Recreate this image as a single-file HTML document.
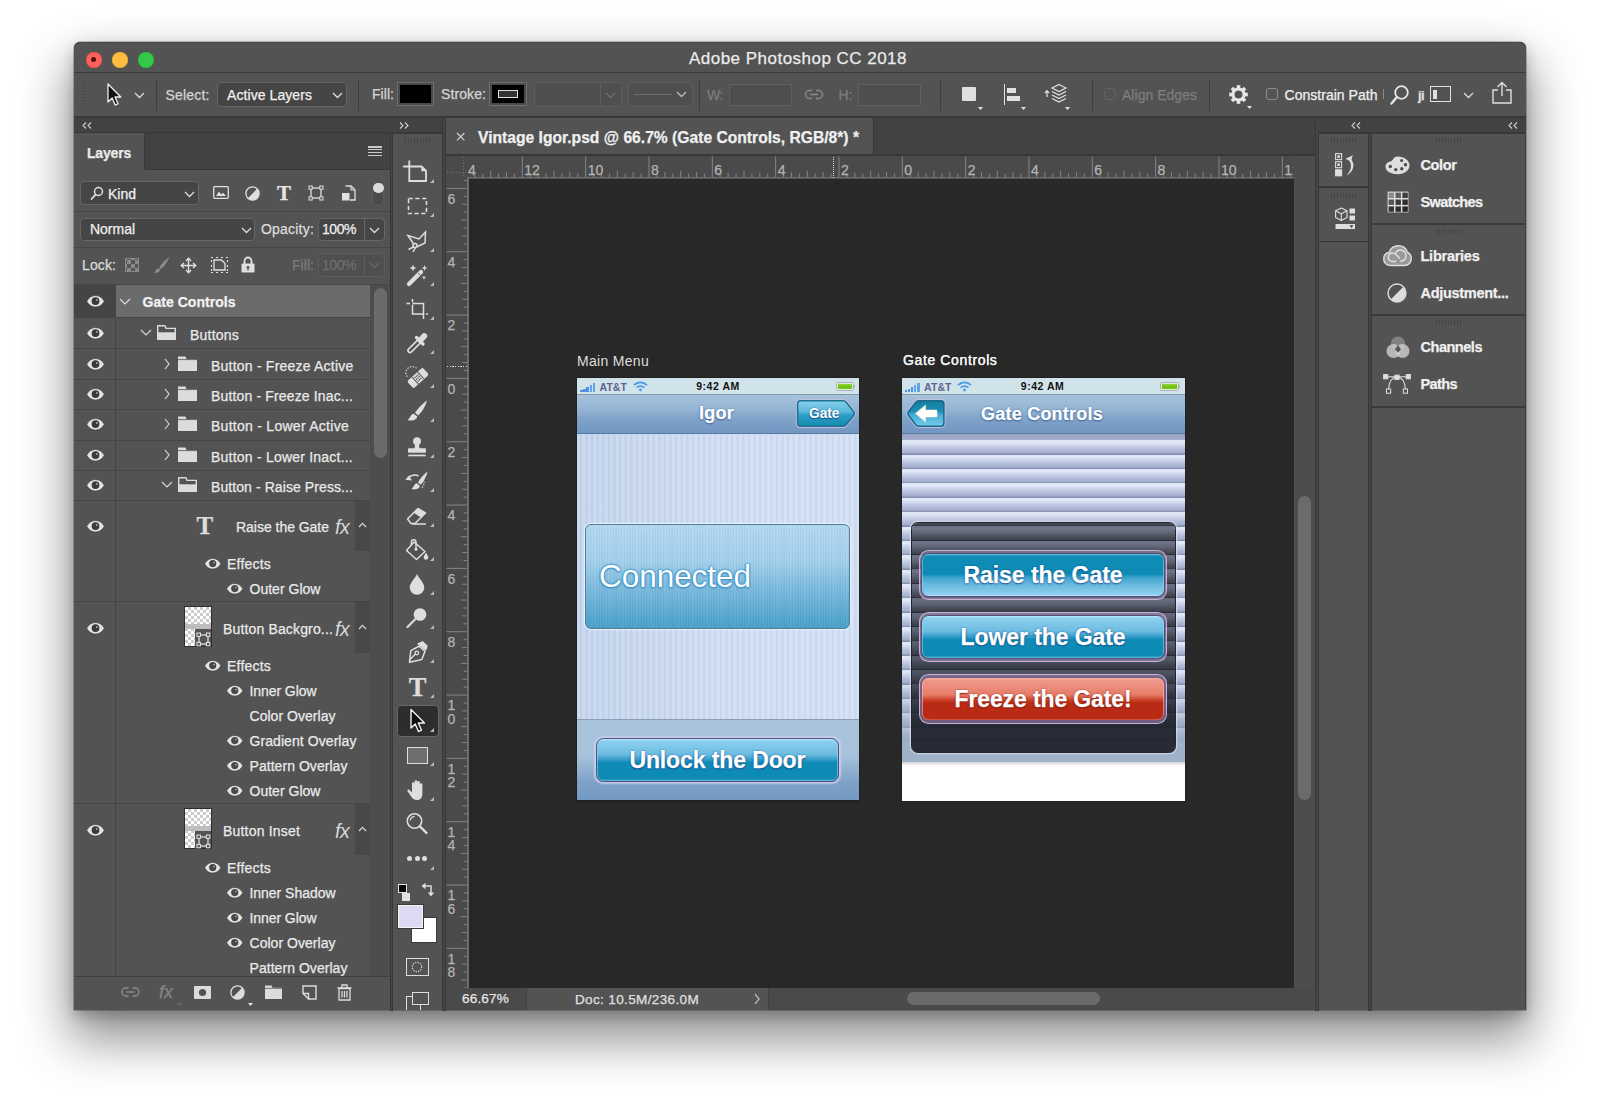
<!DOCTYPE html>
<html><head><meta charset="utf-8"><title>Adobe Photoshop CC 2018</title>
<style>
html,body{margin:0;padding:0;}
body{width:1600px;height:1116px;background:#fff;position:relative;overflow:hidden;font-family:"Liberation Sans",sans-serif;font-size:13px;color:#e8e8e8;}
.a{position:absolute;}
.t{position:absolute;white-space:nowrap;line-height:16px;-webkit-text-stroke:.25px currentColor;}
.b{font-weight:bold;}
#win{position:absolute;left:74px;top:42px;width:1452px;height:968px;background:#535353;border-radius:6px 6px 0 0;box-shadow:inset 0 1px 0 #474747,0 25px 50px 5px rgba(0,0,0,.44),0 6px 14px rgba(0,0,0,.22),0 0 0 .5px rgba(0,0,0,.4);}
.dk{background:#424242;}
.ln{background:#383838;}
.dd{position:absolute;border:1px solid #666;border-radius:4px;background:#454545;box-sizing:border-box;}
svg{position:absolute;overflow:visible;}
</style></head><body>
<div id="win"></div>
<div class="a" style="left:74px;top:71.5px;width:1452px;height:1px;background:#3c3c3c;"></div>
<div class="a" style="left:85.8px;top:51.5px;width:16px;height:16px;border-radius:50%;background:#fc615d;box-shadow:inset 0 0 0 .5px #df4740;"></div>
<div class="a" style="left:112px;top:51.5px;width:16px;height:16px;border-radius:50%;background:#fdbc40;box-shadow:inset 0 0 0 .5px #de9f34;"></div>
<div class="a" style="left:138.4px;top:51.5px;width:16px;height:16px;border-radius:50%;background:#34c84a;box-shadow:inset 0 0 0 .5px #27aa35;"></div>
<div class="a" style="left:91.3px;top:57.0px;width:5px;height:5px;border-radius:50%;background:#5a0e0a;"></div>
<div class="t" style="left:689.00px;top:48.40px;font-size:17px;line-height:22px;letter-spacing:0.478px;color:#ececec;">Adobe Photoshop CC 2018</div>
<div class="a" style="left:74px;top:116px;width:1452px;height:2px;background:#383838;"></div>
<div class="a" style="left:82px;top:82px;width:3px;height:25px;background:repeating-linear-gradient(#484848 0 1px,transparent 1px 3px);"></div>
<svg style="left:104px;top:83px;" width="20" height="24" viewBox="0 0 20 24"><path d="M4 1 L4 19 L8.2 15 L11.2 22 L14 20.8 L11 14 L16.8 14 Z" fill="#111" stroke="#eee" stroke-width="1.3" stroke-linejoin="round"/></svg>
<svg style="left:134px;top:92px;" width="11" height="7" viewBox="0 0 11 7"><path d="M1 1 L5.5 5.5 L10 1" fill="none" stroke="#ddd" stroke-width="1.3"/></svg>
<div class="a" style="left:156px;top:80px;width:1px;height:31px;background:#3e3e3e;"></div>
<div class="t" style="left:165.50px;top:85.50px;font-size:14px;line-height:18px;letter-spacing:0.171px;color:#d6d6d6;">Select:</div>
<div class="dd" style="left:217px;top:82px;width:130px;height:25px;"></div>
<div class="t" style="left:227.00px;top:85.50px;font-size:14px;line-height:18px;letter-spacing:0.074px;color:#f0f0f0;">Active Layers</div>
<svg style="left:332px;top:92px;" width="11" height="7" viewBox="0 0 11 7"><path d="M1 1 L5.5 5.5 L10 1" fill="none" stroke="#ddd" stroke-width="1.3"/></svg>
<div class="a" style="left:358px;top:80px;width:1px;height:31px;background:#3e3e3e;"></div>
<div class="t" style="left:372.00px;top:84.50px;font-size:14px;line-height:18px;letter-spacing:0.045px;color:#d6d6d6;">Fill:</div>
<div class="a" style="left:397px;top:82px;width:37px;height:24px;border:1px solid #6e6e6e;box-sizing:border-box;background:#000;box-shadow:inset 0 0 0 2px #4a4a4a;"></div>
<div class="t" style="left:441.00px;top:84.50px;font-size:14px;line-height:18px;letter-spacing:0.092px;color:#d6d6d6;">Stroke:</div>
<div class="a" style="left:489px;top:82px;width:38px;height:24px;border:1px solid #6e6e6e;box-sizing:border-box;background:#000;box-shadow:inset 0 0 0 2px #4a4a4a;"></div>
<div class="a" style="left:498px;top:90px;width:20px;height:8px;border:1.5px solid #ddd;box-sizing:border-box;background:#333;"></div>
<div class="dd" style="left:534px;top:82px;width:88px;height:25px;border-color:#5e5e5e;background:#4f4f4f;"></div>
<div class="a" style="left:600px;top:83px;width:1px;height:23px;background:#5e5e5e;"></div>
<svg style="left:605px;top:92px;" width="11" height="7" viewBox="0 0 11 7"><path d="M1 1 L5.5 5.5 L10 1" fill="none" stroke="#6e6e6e" stroke-width="1.3"/></svg>
<div class="dd" style="left:628px;top:82px;width:65px;height:25px;border-color:#5e5e5e;background:#4f4f4f;"></div>
<div class="a" style="left:634px;top:93.5px;width:38px;height:1.5px;background:#6a6a6a;"></div>
<svg style="left:676px;top:91px;" width="11" height="7" viewBox="0 0 11 7"><path d="M1 1 L5.5 5.5 L10 1" fill="none" stroke="#bbb" stroke-width="1.3"/></svg>
<div class="a" style="left:699px;top:80px;width:1px;height:31px;background:#3e3e3e;"></div>
<div class="t" style="left:707.00px;top:86.00px;font-size:14px;line-height:18px;letter-spacing:-0.427px;color:#7d7d7d;">W:</div>
<div class="a" style="left:729px;top:84px;width:63px;height:22px;border:1px solid #5f5f5f;box-sizing:border-box;background:#4e4e4e;"></div>
<svg style="left:804px;top:89px;" width="20" height="11" viewBox="0 0 20 11"><g fill="none" stroke="#8a8a8a" stroke-width="1.5"><path d="M8 1.5 H5.5 a4 4 0 0 0 0 8 H8"/><path d="M12 1.5 H14.5 a4 4 0 0 1 0 8 H12"/><path d="M6 5.5 H14"/></g></svg>
<div class="t" style="left:838.50px;top:86.00px;font-size:14px;line-height:18px;letter-spacing:-0.001px;color:#7d7d7d;">H:</div>
<div class="a" style="left:858px;top:84px;width:63px;height:22px;border:1px solid #5f5f5f;box-sizing:border-box;background:#4e4e4e;"></div>
<div class="a" style="left:940px;top:80px;width:1px;height:31px;background:#3e3e3e;"></div>
<div class="a" style="left:962px;top:87px;width:14px;height:14px;background:#e0e0e0;border-radius:1px;"></div>
<svg style="left:977.5px;top:107px;" width="5" height="3" viewBox="0 0 5 3"><path d="M0 0 H5 L2.5 3 Z" fill="#e0e0e0"/></svg>
<div class="a" style="left:1003.5px;top:84px;width:1.5px;height:21px;background:#e0e0e0;"></div>
<div class="a" style="left:1007px;top:88px;width:9px;height:5px;background:#e0e0e0;"></div>
<div class="a" style="left:1007px;top:96px;width:13px;height:5px;background:#e0e0e0;"></div>
<svg style="left:1021px;top:107px;" width="5" height="3" viewBox="0 0 5 3"><path d="M0 0 H5 L2.5 3 Z" fill="#e0e0e0"/></svg>
<svg style="left:1044px;top:83px;" width="26" height="24" viewBox="0 0 26 24"><g fill="none" stroke="#e0e0e0" stroke-width="1.2"><path d="M3 14 V8 M1 10 L3 7.6 L5 10"/><path d="M15 1.5 L22 5 L15 8.5 L8 5 Z" /><path d="M8 8.5 L15 12 L22 8.5"/><path d="M8 12 L15 15.5 L22 12"/><path d="M8 15.5 L15 19 L22 15.5"/></g></svg>
<svg style="left:1065px;top:107px;" width="5" height="3" viewBox="0 0 5 3"><path d="M0 0 H5 L2.5 3 Z" fill="#e0e0e0"/></svg>
<div class="a" style="left:1092px;top:80px;width:1px;height:31px;background:#3e3e3e;"></div>
<div class="a" style="left:1104px;top:88px;width:12px;height:12px;border:1px solid #626262;border-radius:3px;box-sizing:border-box;"></div>
<div class="t" style="left:1122.00px;top:86.00px;font-size:14px;line-height:18px;letter-spacing:0.025px;color:#7d7d7d;">Align Edges</div>
<div class="a" style="left:1209px;top:80px;width:1px;height:31px;background:#3e3e3e;"></div>
<svg style="left:1228.5px;top:84.5px;" width="19" height="19" viewBox="0 0 19 19"><g transform="translate(9.5 9.5)"><g fill="#e6e6e6"><rect x="-1.8" y="-9.3" width="3.6" height="5" transform="rotate(0)"/><rect x="-1.8" y="-9.3" width="3.6" height="5" transform="rotate(45)"/><rect x="-1.8" y="-9.3" width="3.6" height="5" transform="rotate(90)"/><rect x="-1.8" y="-9.3" width="3.6" height="5" transform="rotate(135)"/><rect x="-1.8" y="-9.3" width="3.6" height="5" transform="rotate(180)"/><rect x="-1.8" y="-9.3" width="3.6" height="5" transform="rotate(225)"/><rect x="-1.8" y="-9.3" width="3.6" height="5" transform="rotate(270)"/><rect x="-1.8" y="-9.3" width="3.6" height="5" transform="rotate(315)"/></g><circle r="5.6" fill="none" stroke="#e6e6e6" stroke-width="3"/></g></svg>
<svg style="left:1246.5px;top:106px;" width="5" height="3" viewBox="0 0 5 3"><path d="M0 0 H5 L2.5 3 Z" fill="#e0e0e0"/></svg>
<div class="a" style="left:1266px;top:88px;width:12px;height:12px;border:1px solid #8e8e8e;border-radius:3px;box-sizing:border-box;"></div>
<div class="t" style="left:1284.50px;top:86.00px;font-size:14px;line-height:18px;letter-spacing:0.027px;color:#f0f0f0;">Constrain Path</div>
<div class="a" style="left:1382.5px;top:89px;width:1px;height:10px;background:#8a8a8a;"></div>
<svg style="left:1389px;top:84px;" width="22" height="22" viewBox="0 0 22 22"><circle cx="12.5" cy="8.5" r="6.3" fill="none" stroke="#e6e6e6" stroke-width="1.8"/><path d="M8 13 L2.5 19.5" stroke="#e6e6e6" stroke-width="2.4" stroke-linecap="round"/></svg>
<div class="t" style="left:1418.00px;top:86.50px;font-size:13px;line-height:17px;letter-spacing:-0.611px;font-weight:bold;color:#e0e0e0;">ji</div>
<div class="a" style="left:1430px;top:86px;width:21px;height:16px;border:1.5px solid #e0e0e0;box-sizing:border-box;"></div>
<div class="a" style="left:1433px;top:89.5px;width:3.5px;height:9px;background:#e0e0e0;"></div>
<svg style="left:1463px;top:92px;" width="11" height="7" viewBox="0 0 11 7"><path d="M1 1 L5.5 5.5 L10 1" fill="none" stroke="#ddd" stroke-width="1.3"/></svg>
<svg style="left:1491px;top:81px;" width="22" height="24" viewBox="0 0 22 24"><g fill="none" stroke="#e0e0e0" stroke-width="1.4"><path d="M7 9 H2 V22 H20 V9 H15"/><path d="M11 15 V2 M6.5 6 L11 1.5 L15.5 6"/></g></svg>
<div class="a" style="left:74px;top:118px;width:369px;height:14px;background:#424242;"></div>
<div class="a" style="left:74px;top:132px;width:369px;height:1.9px;background:#383838;"></div>
<svg style="left:82px;top:121.5px;" width="10" height="7" viewBox="0 0 10 7"><path d="M4 0.5 L1 3.5 L4 6.5 M9 0.5 L6 3.5 L9 6.5" fill="none" stroke="#cfcfcf" stroke-width="1.1"/></svg>
<svg style="left:399px;top:121.5px;" width="10" height="7" viewBox="0 0 10 7"><path d="M1 0.5 L4 3.5 L1 6.5 M6 0.5 L9 3.5 L6 6.5" fill="none" stroke="#cfcfcf" stroke-width="1.1"/></svg>
<div class="a" style="left:389.5px;top:133.9px;width:3.6px;height:877px;background:linear-gradient(90deg,#383838 0,#383838 26%,#454545 26%,#454545 74%,#383838 74%);"></div>
<div class="a" style="left:442px;top:117.5px;width:3.8px;height:893px;background:linear-gradient(90deg,#383838 0,#383838 26%,#454545 26%,#454545 74%,#383838 74%);"></div>
<div class="a" style="left:74px;top:133px;width:316px;height:36px;background:#424242;"></div>
<div class="a" style="left:74px;top:133px;width:70px;height:37px;background:#535353;"></div>
<div class="a" style="left:144px;top:133px;width:1px;height:36px;background:#383838;"></div>
<div class="a" style="left:145px;top:169px;width:244.5px;height:1px;background:#383838;"></div>
<div class="t" style="left:87.00px;top:143.50px;font-size:14px;line-height:18px;letter-spacing:-0.192px;font-weight:bold;color:#eaeaea;">Layers</div>
<div class="a" style="left:368px;top:146.3px;width:14px;height:1.3px;background:#c8c8c8;"></div>
<div class="a" style="left:368px;top:149.2px;width:14px;height:1.3px;background:#c8c8c8;"></div>
<div class="a" style="left:368px;top:152px;width:14px;height:1.3px;background:#c8c8c8;"></div>
<div class="a" style="left:368px;top:154.8px;width:14px;height:1.3px;background:#c8c8c8;"></div>
<div class="dd" style="left:80px;top:181.3px;width:119px;height:24.2px;"></div>
<svg style="left:90px;top:186px;" width="14" height="14" viewBox="0 0 14 14"><circle cx="8.5" cy="5.5" r="4" fill="none" stroke="#e0e0e0" stroke-width="1.5"/><path d="M5.6 8.6 L1.5 13" stroke="#e0e0e0" stroke-width="1.8" stroke-linecap="round"/></svg>
<div class="t" style="left:108.00px;top:184.50px;font-size:14px;line-height:18px;letter-spacing:-0.006px;color:#f0f0f0;">Kind</div>
<svg style="left:183.5px;top:191px;" width="11" height="7" viewBox="0 0 11 7"><path d="M1 1 L5.5 5.5 L10 1" fill="none" stroke="#ddd" stroke-width="1.3"/></svg>
<svg style="left:213px;top:186px;" width="16" height="13" viewBox="0 0 16 13"><rect x="0.7" y="0.7" width="14.6" height="11.6" rx="1" fill="none" stroke="#e0e0e0" stroke-width="1.3"/><path d="M3 10 L6 5.5 L8.3 8.5 L10 6.8 L13 10 Z" fill="#e0e0e0"/></svg>
<svg style="left:245px;top:185.5px;" width="15" height="15" viewBox="0 0 15 15"><circle cx="7.5" cy="7.5" r="6.6" fill="none" stroke="#e0e0e0" stroke-width="1.3"/><path d="M2.8 12.2 A6.6 6.6 0 0 0 12.2 2.8 Z" fill="#e0e0e0"/></svg>
<div class="t" style="left:277.00px;top:180.00px;font-size:21px;line-height:27px;font-weight:bold;font-family:'Liberation Serif',serif;color:#e6e6e6;">T</div>
<svg style="left:308px;top:185px;" width="16" height="16" viewBox="0 0 16 16"><rect x="3" y="3" width="10" height="10" fill="none" stroke="#e0e0e0" stroke-width="1.3"/><rect x="1" y="1" width="3.2" height="3.2" fill="#535353" stroke="#e0e0e0" stroke-width="1"/><rect x="11.8" y="1" width="3.2" height="3.2" fill="#535353" stroke="#e0e0e0" stroke-width="1"/><rect x="1" y="11.8" width="3.2" height="3.2" fill="#535353" stroke="#e0e0e0" stroke-width="1"/><rect x="11.8" y="11.8" width="3.2" height="3.2" fill="#535353" stroke="#e0e0e0" stroke-width="1"/></svg>
<svg style="left:341px;top:185px;" width="15" height="16" viewBox="0 0 15 16"><path d="M4.5 1 H10 L14 5 V15 H9" fill="none" stroke="#e0e0e0" stroke-width="1.3"/><path d="M10 1 V5 H14" fill="none" stroke="#e0e0e0" stroke-width="1.1"/><rect x="1" y="8" width="7.5" height="7.5" fill="#e0e0e0"/></svg>
<div class="a" style="left:372px;top:186px;width:12px;height:20px;border-radius:6px;border:1px solid #5f5f5f;box-sizing:border-box;background:#4b4b4b;"></div>
<div class="a" style="left:373px;top:182.5px;width:10.5px;height:10.5px;border-radius:50%;background:#dcdcdc;"></div>
<div class="a" style="left:74px;top:211px;width:316px;height:1px;background:#464646;"></div>
<div class="dd" style="left:80px;top:218px;width:175px;height:23px;"></div>
<div class="t" style="left:90.00px;top:220.00px;font-size:14px;line-height:18px;letter-spacing:-0.020px;color:#f0f0f0;">Normal</div>
<svg style="left:240.5px;top:226.5px;" width="11" height="7" viewBox="0 0 11 7"><path d="M1 1 L5.5 5.5 L10 1" fill="none" stroke="#ddd" stroke-width="1.3"/></svg>
<div class="t" style="left:261.00px;top:220.00px;font-size:14px;line-height:18px;letter-spacing:0.205px;color:#dcdcdc;">Opacity:</div>
<div class="dd" style="left:318px;top:218px;width:67px;height:23px;"></div>
<div class="a" style="left:364px;top:219px;width:1px;height:21px;background:#666;"></div>
<div class="t" style="left:322.00px;top:220.00px;font-size:14px;line-height:18px;letter-spacing:-0.453px;color:#f0f0f0;">100%</div>
<svg style="left:369px;top:226.5px;" width="11" height="7" viewBox="0 0 11 7"><path d="M1 1 L5.5 5.5 L10 1" fill="none" stroke="#ddd" stroke-width="1.3"/></svg>
<div class="a" style="left:74px;top:247px;width:316px;height:1px;background:#464646;"></div>
<div class="t" style="left:82.00px;top:256.00px;font-size:14px;line-height:18px;letter-spacing:0.107px;color:#dcdcdc;">Lock:</div>
<div class="a" style="left:125px;top:258px;width:14px;height:14px;background-color:#8a8a8a;background-image:linear-gradient(45deg,#555 25%,transparent 25%,transparent 75%,#555 75%),linear-gradient(45deg,#555 25%,transparent 25%,transparent 75%,#555 75%);background-size:8px 8px;background-position:1px 1px,5px 5px;border:1px solid #8a8a8a;box-sizing:border-box;"></div>
<svg style="left:153px;top:256px;" width="18" height="18" viewBox="0 0 18 18"><path d="M16.5 1 C12 4 8 8.5 6.2 11.5 L8 13 C11 10.5 14.5 6 16.5 1 Z" fill="#8c8c8c"/><path d="M5.3 12.2 C3 12.6 3 15.5 0.8 16.8 C4 17.2 7 16 7.2 13.8 Z" fill="#8c8c8c"/></svg>
<svg style="left:180px;top:256.5px;" width="17" height="17" viewBox="0 0 17 17"><g fill="none" stroke="#e0e0e0" stroke-width="1.4"><path d="M8.5 1.5 V15.5 M1.5 8.5 H15.5"/><path d="M6 4 L8.5 1.3 L11 4 M6 13 L8.5 15.7 L11 13 M4 6 L1.3 8.5 L4 11 M13 6 L15.7 8.5 L13 11"/></g></svg>
<svg style="left:210px;top:256px;" width="19" height="18" viewBox="0 0 19 18"><g fill="none" stroke="#e0e0e0" stroke-width="1.3"><path d="M4 4 H11.5 L15 7.5 V14 H4 Z"/><path d="M1 1.5 H3 M6 1.5 H8 M11 1.5 H13 M16 1.5 H18 M1 16.5 H3 M6 16.5 H8 M11 16.5 H13 M16 16.5 H18 M1.5 4 V6 M1.5 9 V11 M1.5 13 V15 M17.5 4 V6 M17.5 9 V11 M17.5 13 V15" stroke-width="1.1"/></g></svg>
<svg style="left:241px;top:256px;" width="14" height="17" viewBox="0 0 14 17"><path d="M3.5 8 V5 a3.5 3.5 0 0 1 7 0 V8" fill="none" stroke="#e0e0e0" stroke-width="1.8"/><rect x="0.5" y="7.5" width="13" height="9" rx="1" fill="#e0e0e0"/><circle cx="7" cy="11.3" r="1.4" fill="#535353"/><rect x="6.4" y="11.5" width="1.2" height="3" fill="#535353"/></svg>
<div class="t" style="left:292.00px;top:256.00px;font-size:14px;line-height:18px;letter-spacing:0.045px;color:#7c7c7c;">Fill:</div>
<div class="dd" style="left:318px;top:253px;width:67px;height:24px;border-color:#5c5c5c;background:#4f4f4f;"></div>
<div class="a" style="left:364px;top:254px;width:1px;height:22px;background:#5c5c5c;"></div>
<div class="t" style="left:322.00px;top:256.00px;font-size:14px;line-height:18px;letter-spacing:-0.453px;color:#6e6e6e;">100%</div>
<svg style="left:369px;top:262px;" width="11" height="7" viewBox="0 0 11 7"><path d="M1 1 L5.5 5.5 L10 1" fill="none" stroke="#6a6a6a" stroke-width="1.3"/></svg>
<div class="a" style="left:74px;top:284px;width:316px;height:1px;background:#464646;"></div>
<div class="a" style="left:114.5px;top:285px;width:1px;height:691px;background:#454545;"></div>
<div class="a" style="left:370px;top:285px;width:20px;height:691px;background:#4d4d4d;"></div>
<div class="a" style="left:373.5px;top:288px;width:13.5px;height:170px;border-radius:7px;background:#6b6b6b;"></div>
<div class="a" style="left:74px;top:285px;width:40.5px;height:32.5px;background:#454545;"></div>
<div class="a" style="left:115.5px;top:285px;width:254.5px;height:32.5px;background:#6b6b6b;"></div>
<div class="a" style="left:74px;top:317px;width:296px;height:1px;background:#454545;"></div>
<div class="a" style="left:74px;top:348px;width:296px;height:1px;background:#454545;"></div>
<div class="a" style="left:74px;top:378.5px;width:296px;height:1px;background:#454545;"></div>
<div class="a" style="left:74px;top:409px;width:296px;height:1px;background:#454545;"></div>
<div class="a" style="left:74px;top:439.5px;width:296px;height:1px;background:#454545;"></div>
<div class="a" style="left:74px;top:470px;width:296px;height:1px;background:#454545;"></div>
<div class="a" style="left:74px;top:500px;width:296px;height:1px;background:#454545;"></div>
<svg style="left:85.8px;top:295.0px;" width="19.0" height="12.6" viewBox="0 0 19 12.6"><path d="M0.7 6.3 C4.5 -1.4 14.5 -1.4 18.3 6.3 C14.5 14 4.5 14 0.7 6.3 Z" fill="#e4e4e4" stroke="#3f3f3f" stroke-width=".7"/><circle cx="9.5" cy="6.1" r="3.9" fill="#3a3a3a"/><circle cx="10.8" cy="5" r="0.95" fill="#a8a8a8"/></svg>
<svg style="left:85.8px;top:327.0px;" width="19.0" height="12.6" viewBox="0 0 19 12.6"><path d="M0.7 6.3 C4.5 -1.4 14.5 -1.4 18.3 6.3 C14.5 14 4.5 14 0.7 6.3 Z" fill="#e4e4e4" stroke="#3f3f3f" stroke-width=".7"/><circle cx="9.5" cy="6.1" r="3.9" fill="#3a3a3a"/><circle cx="10.8" cy="5" r="0.95" fill="#a8a8a8"/></svg>
<svg style="left:85.8px;top:357.7px;" width="19.0" height="12.6" viewBox="0 0 19 12.6"><path d="M0.7 6.3 C4.5 -1.4 14.5 -1.4 18.3 6.3 C14.5 14 4.5 14 0.7 6.3 Z" fill="#e4e4e4" stroke="#3f3f3f" stroke-width=".7"/><circle cx="9.5" cy="6.1" r="3.9" fill="#3a3a3a"/><circle cx="10.8" cy="5" r="0.95" fill="#a8a8a8"/></svg>
<svg style="left:85.8px;top:388.0px;" width="19.0" height="12.6" viewBox="0 0 19 12.6"><path d="M0.7 6.3 C4.5 -1.4 14.5 -1.4 18.3 6.3 C14.5 14 4.5 14 0.7 6.3 Z" fill="#e4e4e4" stroke="#3f3f3f" stroke-width=".7"/><circle cx="9.5" cy="6.1" r="3.9" fill="#3a3a3a"/><circle cx="10.8" cy="5" r="0.95" fill="#a8a8a8"/></svg>
<svg style="left:85.8px;top:418.2px;" width="19.0" height="12.6" viewBox="0 0 19 12.6"><path d="M0.7 6.3 C4.5 -1.4 14.5 -1.4 18.3 6.3 C14.5 14 4.5 14 0.7 6.3 Z" fill="#e4e4e4" stroke="#3f3f3f" stroke-width=".7"/><circle cx="9.5" cy="6.1" r="3.9" fill="#3a3a3a"/><circle cx="10.8" cy="5" r="0.95" fill="#a8a8a8"/></svg>
<svg style="left:85.8px;top:448.7px;" width="19.0" height="12.6" viewBox="0 0 19 12.6"><path d="M0.7 6.3 C4.5 -1.4 14.5 -1.4 18.3 6.3 C14.5 14 4.5 14 0.7 6.3 Z" fill="#e4e4e4" stroke="#3f3f3f" stroke-width=".7"/><circle cx="9.5" cy="6.1" r="3.9" fill="#3a3a3a"/><circle cx="10.8" cy="5" r="0.95" fill="#a8a8a8"/></svg>
<svg style="left:85.8px;top:479.0px;" width="19.0" height="12.6" viewBox="0 0 19 12.6"><path d="M0.7 6.3 C4.5 -1.4 14.5 -1.4 18.3 6.3 C14.5 14 4.5 14 0.7 6.3 Z" fill="#e4e4e4" stroke="#3f3f3f" stroke-width=".7"/><circle cx="9.5" cy="6.1" r="3.9" fill="#3a3a3a"/><circle cx="10.8" cy="5" r="0.95" fill="#a8a8a8"/></svg>
<svg style="left:85.8px;top:520.0px;" width="19.0" height="12.6" viewBox="0 0 19 12.6"><path d="M0.7 6.3 C4.5 -1.4 14.5 -1.4 18.3 6.3 C14.5 14 4.5 14 0.7 6.3 Z" fill="#e4e4e4" stroke="#3f3f3f" stroke-width=".7"/><circle cx="9.5" cy="6.1" r="3.9" fill="#3a3a3a"/><circle cx="10.8" cy="5" r="0.95" fill="#a8a8a8"/></svg>
<svg style="left:85.8px;top:622.0px;" width="19.0" height="12.6" viewBox="0 0 19 12.6"><path d="M0.7 6.3 C4.5 -1.4 14.5 -1.4 18.3 6.3 C14.5 14 4.5 14 0.7 6.3 Z" fill="#e4e4e4" stroke="#3f3f3f" stroke-width=".7"/><circle cx="9.5" cy="6.1" r="3.9" fill="#3a3a3a"/><circle cx="10.8" cy="5" r="0.95" fill="#a8a8a8"/></svg>
<svg style="left:85.8px;top:824.0px;" width="19.0" height="12.6" viewBox="0 0 19 12.6"><path d="M0.7 6.3 C4.5 -1.4 14.5 -1.4 18.3 6.3 C14.5 14 4.5 14 0.7 6.3 Z" fill="#e4e4e4" stroke="#3f3f3f" stroke-width=".7"/><circle cx="9.5" cy="6.1" r="3.9" fill="#3a3a3a"/><circle cx="10.8" cy="5" r="0.95" fill="#a8a8a8"/></svg>
<svg style="left:118.7px;top:298px;" width="12" height="7" viewBox="0 0 12 7"><path d="M1 1 L6 6 L11 1" fill="none" stroke="#dedede" stroke-width="1.2"/></svg>
<div class="t" style="left:142.50px;top:292.50px;font-size:14px;line-height:18px;letter-spacing:0.033px;font-weight:bold;color:#f2f2f2;">Gate Controls</div>
<svg style="left:140px;top:328.5px;" width="12" height="7" viewBox="0 0 12 7"><path d="M1 1 L6 6 L11 1" fill="none" stroke="#d8d8d8" stroke-width="1.2"/></svg>
<svg style="left:157px;top:325px;" width="19" height="15" viewBox="0 0 19 15"><path d="M0.7 14.3 V0.8 H8 L9 3.4 H18.3 V14.3 Z" fill="none" stroke="#dcdcdc" stroke-width="1.4" stroke-linejoin="round"/><rect x="0.7" y="7.3" width="17.6" height="7" fill="#dcdcdc"/></svg>
<div class="t" style="left:190.00px;top:326.00px;font-size:14px;line-height:18px;letter-spacing:0.217px;color:#eaeaea;">Buttons</div>
<svg style="left:163.5px;top:357.5px;" width="6" height="12" viewBox="0 0 6 12"><path d="M1 1 L5 6 L1 11" fill="none" stroke="#d8d8d8" stroke-width="1.2"/></svg>
<svg style="left:178px;top:355.5px;" width="19" height="15" viewBox="0 0 19 15"><path d="M0 15 V0.5 H7.5 L8.6 3.2 H19 V15 Z" fill="#dcdcdc"/><path d="M0 3.6 H19" stroke="#535353" stroke-width="0.8"/></svg>
<div class="t" style="left:211.00px;top:356.50px;font-size:14px;line-height:18px;letter-spacing:0.216px;color:#eaeaea;">Button - Freeze Active</div>
<svg style="left:163.5px;top:387.5px;" width="6" height="12" viewBox="0 0 6 12"><path d="M1 1 L5 6 L1 11" fill="none" stroke="#d8d8d8" stroke-width="1.2"/></svg>
<svg style="left:178px;top:385.5px;" width="19" height="15" viewBox="0 0 19 15"><path d="M0 15 V0.5 H7.5 L8.6 3.2 H19 V15 Z" fill="#dcdcdc"/><path d="M0 3.6 H19" stroke="#535353" stroke-width="0.8"/></svg>
<div class="t" style="left:211.00px;top:386.50px;font-size:14px;line-height:18px;letter-spacing:0.151px;color:#eaeaea;">Button - Freeze Inac...</div>
<svg style="left:163.5px;top:418px;" width="6" height="12" viewBox="0 0 6 12"><path d="M1 1 L5 6 L1 11" fill="none" stroke="#d8d8d8" stroke-width="1.2"/></svg>
<svg style="left:178px;top:416px;" width="19" height="15" viewBox="0 0 19 15"><path d="M0 15 V0.5 H7.5 L8.6 3.2 H19 V15 Z" fill="#dcdcdc"/><path d="M0 3.6 H19" stroke="#535353" stroke-width="0.8"/></svg>
<div class="t" style="left:211.00px;top:417.00px;font-size:14px;line-height:18px;letter-spacing:0.271px;color:#eaeaea;">Button - Lower Active</div>
<svg style="left:163.5px;top:448.5px;" width="6" height="12" viewBox="0 0 6 12"><path d="M1 1 L5 6 L1 11" fill="none" stroke="#d8d8d8" stroke-width="1.2"/></svg>
<svg style="left:178px;top:446.5px;" width="19" height="15" viewBox="0 0 19 15"><path d="M0 15 V0.5 H7.5 L8.6 3.2 H19 V15 Z" fill="#dcdcdc"/><path d="M0 3.6 H19" stroke="#535353" stroke-width="0.8"/></svg>
<div class="t" style="left:211.00px;top:447.50px;font-size:14px;line-height:18px;letter-spacing:0.218px;color:#eaeaea;">Button - Lower Inact...</div>
<svg style="left:160.5px;top:480.5px;" width="12" height="7" viewBox="0 0 12 7"><path d="M1 1 L6 6 L11 1" fill="none" stroke="#d8d8d8" stroke-width="1.2"/></svg>
<svg style="left:178px;top:476.5px;" width="19" height="15" viewBox="0 0 19 15"><path d="M0.7 14.3 V0.8 H8 L9 3.4 H18.3 V14.3 Z" fill="none" stroke="#dcdcdc" stroke-width="1.4" stroke-linejoin="round"/><rect x="0.7" y="7.3" width="17.6" height="7" fill="#dcdcdc"/></svg>
<div class="t" style="left:211.00px;top:477.50px;font-size:14px;line-height:18px;letter-spacing:0.084px;color:#eaeaea;">Button - Raise Press...</div>
<div class="a" style="left:355px;top:500.5px;width:15px;height:50.5px;background:#484848;"></div>
<div class="a" style="left:355px;top:602px;width:15px;height:51px;background:#484848;"></div>
<div class="a" style="left:355px;top:804px;width:15px;height:51px;background:#484848;"></div>
<svg style="left:358px;top:522px;" width="9" height="6" viewBox="0 0 9 6"><path d="M1 5 L4.5 1.3 L8 5" fill="none" stroke="#d8d8d8" stroke-width="1.2"/></svg>
<svg style="left:358px;top:624px;" width="9" height="6" viewBox="0 0 9 6"><path d="M1 5 L4.5 1.3 L8 5" fill="none" stroke="#d8d8d8" stroke-width="1.2"/></svg>
<svg style="left:358px;top:826px;" width="9" height="6" viewBox="0 0 9 6"><path d="M1 5 L4.5 1.3 L8 5" fill="none" stroke="#d8d8d8" stroke-width="1.2"/></svg>
<div class="a" style="left:74px;top:601px;width:296px;height:1px;background:#454545;"></div>
<div class="a" style="left:74px;top:803px;width:296px;height:1px;background:#454545;"></div>
<div class="t" style="left:196.46px;top:509.50px;font-size:25px;line-height:32px;font-weight:bold;font-family:'Liberation Serif',serif;color:#dedede;">T</div>
<div class="t" style="left:236.00px;top:518.40px;font-size:14px;line-height:18px;letter-spacing:-0.028px;color:#eaeaea;">Raise the Gate</div>
<div class="t" style="left:335.00px;top:514.70px;font-size:19.5px;line-height:25px;letter-spacing:-0.334px;font-style:italic;color:#d8d8d8;-webkit-text-stroke:0;">fx</div>
<svg style="left:203.76px;top:558.204px;" width="17.48" height="11.592" viewBox="0 0 19 12.6"><path d="M0.7 6.3 C4.5 -1.4 14.5 -1.4 18.3 6.3 C14.5 14 4.5 14 0.7 6.3 Z" fill="#e4e4e4" stroke="#3f3f3f" stroke-width=".7"/><circle cx="9.5" cy="6.1" r="3.9" fill="#474747"/><circle cx="10.8" cy="5" r="0.95" fill="#a8a8a8"/></svg>
<div class="t" style="left:227.00px;top:555.20px;font-size:14px;line-height:18px;letter-spacing:0.208px;color:#eaeaea;">Effects</div>
<svg style="left:226.26px;top:583.204px;" width="17.48" height="11.592" viewBox="0 0 19 12.6"><path d="M0.7 6.3 C4.5 -1.4 14.5 -1.4 18.3 6.3 C14.5 14 4.5 14 0.7 6.3 Z" fill="#e4e4e4" stroke="#3f3f3f" stroke-width=".7"/><circle cx="9.5" cy="6.1" r="3.9" fill="#474747"/><circle cx="10.8" cy="5" r="0.95" fill="#a8a8a8"/></svg>
<div class="t" style="left:249.50px;top:580.20px;font-size:14px;line-height:18px;letter-spacing:0.019px;color:#eaeaea;">Outer Glow</div>
<div class="a" style="left:183.8px;top:606px;width:28px;height:41px;background:#fff;border:1px solid #2e2e2e;box-sizing:border-box;overflow:hidden;"><div class="a" style="left:0;top:0;width:26px;height:39px;background-color:#fff;background-image:linear-gradient(45deg,#ccc 25%,transparent 25%,transparent 75%,#ccc 75%),linear-gradient(45deg,#ccc 25%,transparent 25%,transparent 75%,#ccc 75%);background-size:6px 6px;background-position:0 0,3px 3px;"></div><div class="a" style="left:0;top:17px;width:26px;height:5px;background:#bdbdbd;"></div><div class="a" style="left:10px;top:22px;width:16px;height:17px;background:#535353;"></div></div>
<svg style="left:195.8px;top:632px;" width="15" height="15" viewBox="0 0 15 15"><rect x="3" y="3" width="9" height="9" fill="none" stroke="#e6e6e6" stroke-width="1.2"/><rect x="1" y="1" width="3.4" height="3.4" fill="#535353" stroke="#e6e6e6" stroke-width="1"/><rect x="10.4" y="1" width="3.4" height="3.4" fill="#535353" stroke="#e6e6e6" stroke-width="1"/><rect x="1" y="10.4" width="3.4" height="3.4" fill="#535353" stroke="#e6e6e6" stroke-width="1"/><rect x="10.4" y="10.4" width="3.4" height="3.4" fill="#535353" stroke="#e6e6e6" stroke-width="1"/></svg>
<div class="t" style="left:223.00px;top:619.80px;font-size:14px;line-height:18px;letter-spacing:0.153px;color:#eaeaea;">Button Backgro...</div>
<div class="t" style="left:335.00px;top:616.70px;font-size:19.5px;line-height:25px;letter-spacing:-0.334px;font-style:italic;color:#d8d8d8;-webkit-text-stroke:0;">fx</div>
<svg style="left:203.76px;top:659.704px;" width="17.48" height="11.592" viewBox="0 0 19 12.6"><path d="M0.7 6.3 C4.5 -1.4 14.5 -1.4 18.3 6.3 C14.5 14 4.5 14 0.7 6.3 Z" fill="#e4e4e4" stroke="#3f3f3f" stroke-width=".7"/><circle cx="9.5" cy="6.1" r="3.9" fill="#474747"/><circle cx="10.8" cy="5" r="0.95" fill="#a8a8a8"/></svg>
<div class="t" style="left:227.00px;top:656.70px;font-size:14px;line-height:18px;letter-spacing:0.208px;color:#eaeaea;">Effects</div>
<svg style="left:226.26px;top:684.704px;" width="17.48" height="11.592" viewBox="0 0 19 12.6"><path d="M0.7 6.3 C4.5 -1.4 14.5 -1.4 18.3 6.3 C14.5 14 4.5 14 0.7 6.3 Z" fill="#e4e4e4" stroke="#3f3f3f" stroke-width=".7"/><circle cx="9.5" cy="6.1" r="3.9" fill="#474747"/><circle cx="10.8" cy="5" r="0.95" fill="#a8a8a8"/></svg>
<div class="t" style="left:249.50px;top:681.70px;font-size:14px;line-height:18px;letter-spacing:-0.071px;color:#eaeaea;">Inner Glow</div>
<div class="t" style="left:249.50px;top:706.70px;font-size:14px;line-height:18px;letter-spacing:0.032px;color:#eaeaea;">Color Overlay</div>
<svg style="left:226.26px;top:734.704px;" width="17.48" height="11.592" viewBox="0 0 19 12.6"><path d="M0.7 6.3 C4.5 -1.4 14.5 -1.4 18.3 6.3 C14.5 14 4.5 14 0.7 6.3 Z" fill="#e4e4e4" stroke="#3f3f3f" stroke-width=".7"/><circle cx="9.5" cy="6.1" r="3.9" fill="#474747"/><circle cx="10.8" cy="5" r="0.95" fill="#a8a8a8"/></svg>
<div class="t" style="left:249.50px;top:731.70px;font-size:14px;line-height:18px;letter-spacing:0.073px;color:#eaeaea;">Gradient Overlay</div>
<svg style="left:226.26px;top:759.704px;" width="17.48" height="11.592" viewBox="0 0 19 12.6"><path d="M0.7 6.3 C4.5 -1.4 14.5 -1.4 18.3 6.3 C14.5 14 4.5 14 0.7 6.3 Z" fill="#e4e4e4" stroke="#3f3f3f" stroke-width=".7"/><circle cx="9.5" cy="6.1" r="3.9" fill="#474747"/><circle cx="10.8" cy="5" r="0.95" fill="#a8a8a8"/></svg>
<div class="t" style="left:249.50px;top:756.70px;font-size:14px;line-height:18px;letter-spacing:0.049px;color:#eaeaea;">Pattern Overlay</div>
<svg style="left:226.26px;top:784.704px;" width="17.48" height="11.592" viewBox="0 0 19 12.6"><path d="M0.7 6.3 C4.5 -1.4 14.5 -1.4 18.3 6.3 C14.5 14 4.5 14 0.7 6.3 Z" fill="#e4e4e4" stroke="#3f3f3f" stroke-width=".7"/><circle cx="9.5" cy="6.1" r="3.9" fill="#474747"/><circle cx="10.8" cy="5" r="0.95" fill="#a8a8a8"/></svg>
<div class="t" style="left:249.50px;top:781.70px;font-size:14px;line-height:18px;letter-spacing:0.019px;color:#eaeaea;">Outer Glow</div>
<div class="a" style="left:183.8px;top:808px;width:28px;height:41px;background:#fff;border:1px solid #2e2e2e;box-sizing:border-box;overflow:hidden;"><div class="a" style="left:0;top:0;width:26px;height:39px;background-color:#fff;background-image:linear-gradient(45deg,#ccc 25%,transparent 25%,transparent 75%,#ccc 75%),linear-gradient(45deg,#ccc 25%,transparent 25%,transparent 75%,#ccc 75%);background-size:6px 6px;background-position:0 0,3px 3px;"></div><div class="a" style="left:0;top:17px;width:26px;height:5px;background:#bdbdbd;"></div><div class="a" style="left:10px;top:22px;width:16px;height:17px;background:#535353;"></div></div>
<svg style="left:195.8px;top:834px;" width="15" height="15" viewBox="0 0 15 15"><rect x="3" y="3" width="9" height="9" fill="none" stroke="#e6e6e6" stroke-width="1.2"/><rect x="1" y="1" width="3.4" height="3.4" fill="#535353" stroke="#e6e6e6" stroke-width="1"/><rect x="10.4" y="1" width="3.4" height="3.4" fill="#535353" stroke="#e6e6e6" stroke-width="1"/><rect x="1" y="10.4" width="3.4" height="3.4" fill="#535353" stroke="#e6e6e6" stroke-width="1"/><rect x="10.4" y="10.4" width="3.4" height="3.4" fill="#535353" stroke="#e6e6e6" stroke-width="1"/></svg>
<div class="t" style="left:223.00px;top:821.80px;font-size:14px;line-height:18px;letter-spacing:0.189px;color:#eaeaea;">Button Inset</div>
<div class="t" style="left:335.00px;top:818.70px;font-size:19.5px;line-height:25px;letter-spacing:-0.334px;font-style:italic;color:#d8d8d8;-webkit-text-stroke:0;">fx</div>
<svg style="left:203.76px;top:861.704px;" width="17.48" height="11.592" viewBox="0 0 19 12.6"><path d="M0.7 6.3 C4.5 -1.4 14.5 -1.4 18.3 6.3 C14.5 14 4.5 14 0.7 6.3 Z" fill="#e4e4e4" stroke="#3f3f3f" stroke-width=".7"/><circle cx="9.5" cy="6.1" r="3.9" fill="#474747"/><circle cx="10.8" cy="5" r="0.95" fill="#a8a8a8"/></svg>
<div class="t" style="left:227.00px;top:858.70px;font-size:14px;line-height:18px;letter-spacing:0.208px;color:#eaeaea;">Effects</div>
<svg style="left:226.26px;top:886.704px;" width="17.48" height="11.592" viewBox="0 0 19 12.6"><path d="M0.7 6.3 C4.5 -1.4 14.5 -1.4 18.3 6.3 C14.5 14 4.5 14 0.7 6.3 Z" fill="#e4e4e4" stroke="#3f3f3f" stroke-width=".7"/><circle cx="9.5" cy="6.1" r="3.9" fill="#474747"/><circle cx="10.8" cy="5" r="0.95" fill="#a8a8a8"/></svg>
<div class="t" style="left:249.50px;top:883.70px;font-size:14px;line-height:18px;letter-spacing:-0.034px;color:#eaeaea;">Inner Shadow</div>
<svg style="left:226.26px;top:911.704px;" width="17.48" height="11.592" viewBox="0 0 19 12.6"><path d="M0.7 6.3 C4.5 -1.4 14.5 -1.4 18.3 6.3 C14.5 14 4.5 14 0.7 6.3 Z" fill="#e4e4e4" stroke="#3f3f3f" stroke-width=".7"/><circle cx="9.5" cy="6.1" r="3.9" fill="#474747"/><circle cx="10.8" cy="5" r="0.95" fill="#a8a8a8"/></svg>
<div class="t" style="left:249.50px;top:908.70px;font-size:14px;line-height:18px;letter-spacing:-0.071px;color:#eaeaea;">Inner Glow</div>
<svg style="left:226.26px;top:936.704px;" width="17.48" height="11.592" viewBox="0 0 19 12.6"><path d="M0.7 6.3 C4.5 -1.4 14.5 -1.4 18.3 6.3 C14.5 14 4.5 14 0.7 6.3 Z" fill="#e4e4e4" stroke="#3f3f3f" stroke-width=".7"/><circle cx="9.5" cy="6.1" r="3.9" fill="#474747"/><circle cx="10.8" cy="5" r="0.95" fill="#a8a8a8"/></svg>
<div class="t" style="left:249.50px;top:933.70px;font-size:14px;line-height:18px;letter-spacing:0.032px;color:#eaeaea;">Color Overlay</div>
<div class="t" style="left:249.50px;top:958.70px;font-size:14px;line-height:18px;letter-spacing:0.049px;color:#eaeaea;">Pattern Overlay</div>
<div class="a" style="left:74px;top:976px;width:316px;height:34px;background:#535353;"></div>
<div class="a" style="left:74px;top:975.5px;width:316px;height:1.5px;background:#3e3e3e;"></div>
<svg style="left:120.5px;top:987px;" width="19" height="10" viewBox="0 0 19 10"><g fill="none" stroke="#8a8a8a" stroke-width="1.5"><path d="M7.5 1 H5 a4 4 0 0 0 0 8 H7.5"/><path d="M11.5 1 H14 a4 4 0 0 1 0 8 H11.5"/><path d="M5.5 5 H13.5"/></g></svg>
<div class="t" style="left:159.00px;top:980.50px;font-size:18px;line-height:23px;letter-spacing:-0.001px;font-style:italic;color:#858585;">fx</div>
<svg style="left:177px;top:1002.5px;" width="5" height="3" viewBox="0 0 5 3"><path d="M0 0 H5 L2.5 3 Z" fill="#6a6a6a"/></svg>
<svg style="left:193.5px;top:985.5px;" width="17" height="13" viewBox="0 0 17 13"><rect x="0" y="0" width="17" height="13" rx="1" fill="#dcdcdc"/><circle cx="8.5" cy="6.5" r="3.6" fill="#535353"/></svg>
<svg style="left:230px;top:984.5px;" width="15" height="15" viewBox="0 0 15 15"><circle cx="7.5" cy="7.5" r="6.6" fill="none" stroke="#dcdcdc" stroke-width="1.3"/><path d="M2.8 12.2 A6.6 6.6 0 0 0 12.2 2.8 Z" fill="#dcdcdc"/></svg>
<svg style="left:247.5px;top:1002.5px;" width="5" height="3" viewBox="0 0 5 3"><path d="M0 0 H5 L2.5 3 Z" fill="#e0e0e0"/></svg>
<svg style="left:264.5px;top:985px;" width="17" height="14" viewBox="0 0 17 14"><path d="M0 14 V0.5 H6.5 L7.6 2.8 H17 V14 Z" fill="#dcdcdc"/><path d="M0 3.3 H17" stroke="#535353" stroke-width="0.8"/></svg>
<svg style="left:301.5px;top:985px;" width="15" height="15" viewBox="0 0 15 15"><path d="M1 1 H14 V14 H6.5 L1 8.5 Z" fill="none" stroke="#dcdcdc" stroke-width="1.4"/><path d="M1 8.5 H6.5 V14" fill="none" stroke="#dcdcdc" stroke-width="1.4"/></svg>
<svg style="left:337px;top:983.5px;" width="15" height="17" viewBox="0 0 15 17"><g fill="none" stroke="#dcdcdc" stroke-width="1.3"><path d="M2 4.5 H13 V16 H2 Z"/><path d="M0.5 4 H14.5 M5 3.5 V1 H10 V3.5"/><path d="M5 7 V13.5 M7.5 7 V13.5 M10 7 V13.5"/></g></svg>
<div class="a" style="left:405px;top:138px;width:25px;height:5px;background:repeating-linear-gradient(90deg,#444 0 1px,transparent 1px 3px);"></div>
<div class="a" style="left:396.5px;top:704.5px;width:42px;height:32.5px;border-radius:4px;background:#2d2d2d;border:1px solid #686868;box-sizing:border-box;"></div>
<svg style="left:405.0px;top:159.5px;" width="24" height="24" viewBox="0 0 24 24"><g fill="none" stroke="#dedede" stroke-width="1.8"><path d="M4.3 0.4 V21 H21 V10.8 L16.7 6.5 H-1.9"/></g><path d="M16.3 6 V11.2 H21.5 Z" fill="#dedede"/></svg>
<svg style="left:405.0px;top:194px;" width="24" height="24" viewBox="0 0 24 24"><rect x="3.5" y="4.5" width="18" height="15" fill="none" stroke="#dedede" stroke-width="1.5" stroke-dasharray="4.2 2.6" stroke-width="1.7"/></svg>
<svg style="left:405.0px;top:228.5px;" width="24" height="24" viewBox="0 0 24 24"><g fill="none" stroke="#dedede" stroke-width="1.5" stroke-width="1.4"><path d="M9 15.5 L3 6.5 L14 10 L20.5 3 L20 14 L11.5 18"/><circle cx="10" cy="16.5" r="2"/><path d="M8.5 18 L3.5 20.5 M10.5 18.5 L8 23"/></g></svg>
<svg style="left:405.0px;top:262.5px;" width="24" height="24" viewBox="0 0 24 24"><path d="M4 21 L16 9" stroke="#dedede" stroke-width="4.2" stroke-linecap="round"/><path d="M13.2 10 L15.2 12" stroke="#535353" stroke-width="1"/><g fill="#dedede"><path d="M8 1.5 L8.9 4.1 L11.5 5 L8.9 5.9 L8 8.5 L7.1 5.9 L4.5 5 L7.1 4.1 Z"/><path d="M19.5 2 L20.3 4.2 L22.5 5 L20.3 5.8 L19.5 8 L18.7 5.8 L16.5 5 L18.7 4.2 Z"/><path d="M19 12 L19.6 13.9 L21.5 14.5 L19.6 15.1 L19 17 L18.4 15.1 L16.5 14.5 L18.4 13.9 Z"/></g></svg>
<svg style="left:405.0px;top:297px;" width="24" height="24" viewBox="0 0 24 24"><g fill="none" stroke="#dedede" stroke-width="1.5" stroke-width="1.7"><path d="M1.5 6.5 H5 M7.5 2 V17 H23 M5 6.5 H18.5 V22 M21 17 H23"/></g><rect x="5" y="5" width="2.5" height="3" fill="#535353"/><rect x="19.5" y="15.5" width="1.5" height="3" fill="#535353"/></svg>
<svg style="left:405.0px;top:331px;" width="24" height="24" viewBox="0 0 24 24"><g><path d="M5 19.5 L14.5 10" stroke="#dedede" stroke-width="5.6" stroke-linecap="round"/><path d="M5 19.5 L15 9.5" stroke="#535353" stroke-width="2.4" stroke-linecap="round"/><path d="M11.5 6.5 L18 13" stroke="#dedede" stroke-width="3.4" stroke-linecap="round"/><path d="M15.3 9.2 L19.3 5" stroke="#dedede" stroke-width="5.8" stroke-linecap="round"/></g></svg>
<svg style="left:405.0px;top:365px;" width="24" height="24" viewBox="0 0 24 24"><g transform="rotate(-42 13 13)"><rect x="2.5" y="8.2" width="21" height="9.6" rx="2" fill="#dedede"/><path d="M9.2 8.2 V17.8 M16.8 8.2 V17.8" stroke="#535353" stroke-width="1"/><g fill="#535353"><circle cx="11.2" cy="10.6" r=".75"/><circle cx="13" cy="10.6" r=".75"/><circle cx="14.8" cy="10.6" r=".75"/><circle cx="11.2" cy="13" r=".75"/><circle cx="13" cy="13" r=".75"/><circle cx="14.8" cy="13" r=".75"/><circle cx="11.2" cy="15.4" r=".75"/><circle cx="13" cy="15.4" r=".75"/><circle cx="14.8" cy="15.4" r=".75"/></g></g><path d="M11.5 3.2 A6 6 0 0 0 3 12.5" fill="none" stroke="#dedede" stroke-width="1.3" stroke-dasharray="1.3 1.5"/></svg>
<svg style="left:405.0px;top:399px;" width="24" height="24" viewBox="0 0 24 24"><path d="M22 1.5 C17.5 4.5 12.5 10 10 13.8 L13 16.6 C16.5 13.5 20.5 7.5 22 1.5 Z" fill="#dedede"/><path d="M8.8 14.8 C5.5 15 5.6 19.2 2.4 21 C7 22.6 12.2 20.8 12.2 17.6 Z" fill="#dedede"/></svg>
<svg style="left:405.0px;top:434.5px;" width="24" height="24" viewBox="0 0 24 24"><g fill="#dedede"><circle cx="12" cy="6.2" r="3.9"/><path d="M10.3 8 H13.7 L14.5 14 H9.5 Z"/><rect x="3" y="13.3" width="18" height="4.4" rx="1"/><rect x="3.3" y="19.6" width="17.4" height="1.7"/></g></svg>
<svg style="left:405.0px;top:469px;" width="24" height="24" viewBox="0 0 24 24"><path d="M22.5 2.5 C18.5 5.5 15 9.8 13 13.4 L15.6 15.8 C18.5 13 21.3 7.8 22.5 2.5 Z" fill="#dedede"/><path d="M11.9 14.3 C9 14.5 9.2 18.2 6.3 20 C10.5 21.4 14.8 19.6 14.8 16.8 Z" fill="#dedede"/><path d="M3 9.5 C5.5 6 10 5 13.5 7" fill="none" stroke="#dedede" stroke-width="1.5"/><path d="M0.3 10.8 L6.8 11.6 L4.2 6.2 Z" fill="#dedede"/><path d="M19 12.5 A7.5 7.5 0 0 1 16 19.5" fill="none" stroke="#dedede" stroke-width="1.3" stroke-dasharray="1.2 1.5"/></svg>
<svg style="left:405.0px;top:504px;" width="24" height="24" viewBox="0 0 24 24"><g><path d="M2.5 15 L13 4.5 L20.5 9 L10 19.5 H6 Z" fill="none" stroke="#dedede" stroke-width="1.5" stroke-linejoin="round"/><path d="M8.8 8.7 L13 4.5 L20.5 9 L16 13.5 Z" fill="#dedede"/><path d="M7 20 H21" stroke="#dedede" stroke-width="1.5"/></g></svg>
<svg style="left:405.0px;top:537.5px;" width="24" height="24" viewBox="0 0 24 24"><g fill="none" stroke="#dedede" stroke-width="1.5" stroke-width="1.5"><path d="M9 4 L20 13.5 L11.5 21.5 L1.5 12.5 Z" stroke-linejoin="round"/><path d="M11 11 V4 a2.3 2.3 0 0 0 -4.6 0 V7.5"/></g><circle cx="11" cy="11.3" r="1.5" fill="#dedede"/><path d="M21 14.5 C22 16.5 23.3 18 23.3 19.5 a2.3 2.3 0 0 1 -4.6 0 C18.7 18 20 16.5 21 14.5 Z" fill="#dedede"/></svg>
<svg style="left:405.0px;top:571.5px;" width="24" height="24" viewBox="0 0 24 24"><path d="M12 2 C14 6.5 19.3 11 19.3 15.5 a7.3 7.3 0 0 1 -14.6 0 C4.7 11 10 6.5 12 2 Z" fill="#dedede"/></svg>
<svg style="left:405.0px;top:606px;" width="24" height="24" viewBox="0 0 24 24"><circle cx="15" cy="8.5" r="6.3" fill="#dedede"/><path d="M10.5 13 L2.5 21" stroke="#dedede" stroke-width="2.2" stroke-linecap="round"/></svg>
<svg style="left:405.0px;top:640px;" width="24" height="24" viewBox="0 0 24 24"><g fill="none" stroke="#dedede" stroke-width="1.5" stroke-width="1.5" stroke-linejoin="round"><path d="M3.5 21.5 L6 10 L14.5 6.5 L20 12 L16 20 Z" transform="rotate(-6 12 12)"/><path d="M14 4 L18.5 2.5 L22.5 7 L21 10.5 Z" fill="#dedede" transform="rotate(-6 12 12)"/><path d="M4 20.5 L11 13.5" /></g><circle cx="11.8" cy="13" r="1.8" fill="none" stroke="#dedede" stroke-width="1.3"/></svg>
<div class="t" style="left:408.66px;top:669.50px;font-size:26.5px;line-height:34px;font-weight:bold;font-family:'Liberation Serif',serif;color:#dedede;">T</div>
<svg style="left:409px;top:708px;" width="18" height="26" viewBox="0 0 18 26"><path d="M2 1.5 L2 20 L6.3 16 L9.5 23.5 L12.5 22.2 L9.3 15 L15.5 15 Z" fill="#0c0c0c" stroke="#f0f0f0" stroke-width="1.4" stroke-linejoin="round"/></svg>
<div class="a" style="left:407px;top:746.5px;width:21px;height:17px;border:1.5px solid #dedede;box-sizing:border-box;background:#6e6e6e;"></div>
<svg style="left:405.0px;top:778px;" width="24" height="24" viewBox="0 0 24 24"><path d="M7 13 V5.5 a1.3 1.3 0 0 1 2.6 0 V11 V3.5 a1.3 1.3 0 0 1 2.6 0 V11 V4.2 a1.3 1.3 0 0 1 2.6 0 V11.5 V6.5 a1.3 1.3 0 0 1 2.6 0 V15 C17.4 19.5 15.5 22 12 22 C9 22 7.5 20.5 5.8 18 L2.5 13.2 C1.8 12 3.3 10.8 4.5 12 L7 14.5 Z" fill="#dedede"/></svg>
<svg style="left:405.0px;top:812px;" width="24" height="24" viewBox="0 0 24 24"><circle cx="9.5" cy="9" r="7.2" fill="none" stroke="#dedede" stroke-width="1.6"/><path d="M15 14.5 L21.5 21" stroke="#dedede" stroke-width="2.4" stroke-linecap="round"/><path d="M5.2 8.5 A4.5 4.5 0 0 1 9.5 4.7" fill="none" stroke="#dedede" stroke-width="1.2"/></svg>
<div class="a" style="left:407.2px;top:856.0px;width:5.2px;height:5.2px;border-radius:50%;background:#dedede;"></div>
<div class="a" style="left:414.7px;top:856.0px;width:5.2px;height:5.2px;border-radius:50%;background:#dedede;"></div>
<div class="a" style="left:422.2px;top:856.0px;width:5.2px;height:5.2px;border-radius:50%;background:#dedede;"></div>
<svg style="left:430px;top:178.5px;" width="4" height="4" viewBox="0 0 4 4"><path d="M4 0 V4 H0 Z" fill="#b8b8b8"/></svg>
<svg style="left:430px;top:213px;" width="4" height="4" viewBox="0 0 4 4"><path d="M4 0 V4 H0 Z" fill="#b8b8b8"/></svg>
<svg style="left:430px;top:247.5px;" width="4" height="4" viewBox="0 0 4 4"><path d="M4 0 V4 H0 Z" fill="#b8b8b8"/></svg>
<svg style="left:430px;top:281.5px;" width="4" height="4" viewBox="0 0 4 4"><path d="M4 0 V4 H0 Z" fill="#b8b8b8"/></svg>
<svg style="left:430px;top:316px;" width="4" height="4" viewBox="0 0 4 4"><path d="M4 0 V4 H0 Z" fill="#b8b8b8"/></svg>
<svg style="left:430px;top:350px;" width="4" height="4" viewBox="0 0 4 4"><path d="M4 0 V4 H0 Z" fill="#b8b8b8"/></svg>
<svg style="left:430px;top:384px;" width="4" height="4" viewBox="0 0 4 4"><path d="M4 0 V4 H0 Z" fill="#b8b8b8"/></svg>
<svg style="left:430px;top:418px;" width="4" height="4" viewBox="0 0 4 4"><path d="M4 0 V4 H0 Z" fill="#b8b8b8"/></svg>
<svg style="left:430px;top:453.5px;" width="4" height="4" viewBox="0 0 4 4"><path d="M4 0 V4 H0 Z" fill="#b8b8b8"/></svg>
<svg style="left:430px;top:488px;" width="4" height="4" viewBox="0 0 4 4"><path d="M4 0 V4 H0 Z" fill="#b8b8b8"/></svg>
<svg style="left:430px;top:523px;" width="4" height="4" viewBox="0 0 4 4"><path d="M4 0 V4 H0 Z" fill="#b8b8b8"/></svg>
<svg style="left:430px;top:556.5px;" width="4" height="4" viewBox="0 0 4 4"><path d="M4 0 V4 H0 Z" fill="#b8b8b8"/></svg>
<svg style="left:430px;top:590.5px;" width="4" height="4" viewBox="0 0 4 4"><path d="M4 0 V4 H0 Z" fill="#b8b8b8"/></svg>
<svg style="left:430px;top:625px;" width="4" height="4" viewBox="0 0 4 4"><path d="M4 0 V4 H0 Z" fill="#b8b8b8"/></svg>
<svg style="left:430px;top:659px;" width="4" height="4" viewBox="0 0 4 4"><path d="M4 0 V4 H0 Z" fill="#b8b8b8"/></svg>
<svg style="left:430px;top:694px;" width="4" height="4" viewBox="0 0 4 4"><path d="M4 0 V4 H0 Z" fill="#b8b8b8"/></svg>
<svg style="left:430px;top:728px;" width="4" height="4" viewBox="0 0 4 4"><path d="M4 0 V4 H0 Z" fill="#b8b8b8"/></svg>
<svg style="left:430px;top:762px;" width="4" height="4" viewBox="0 0 4 4"><path d="M4 0 V4 H0 Z" fill="#b8b8b8"/></svg>
<svg style="left:430px;top:797px;" width="4" height="4" viewBox="0 0 4 4"><path d="M4 0 V4 H0 Z" fill="#b8b8b8"/></svg>
<svg style="left:430px;top:865.6px;" width="4" height="4" viewBox="0 0 4 4"><path d="M4 0 V4 H0 Z" fill="#b8b8b8"/></svg>
<div class="a" style="left:402px;top:893px;width:8px;height:8px;background:#e0e0e0;"></div>
<div class="a" style="left:397.5px;top:883.5px;width:9.5px;height:9.5px;background:#0a0a0a;border:1.5px solid #e0e0e0;box-sizing:border-box;"></div>
<svg style="left:421px;top:882px;" width="14" height="15" viewBox="0 0 14 15"><g fill="none" stroke="#dedede" stroke-width="1.5"><path d="M2 4 H10 V12"/></g><path d="M0.5 4 L4.5 0.8 V7.2 Z M10 14.5 L6.8 10.5 H13.2 Z" fill="#dedede"/></svg>
<div class="a" style="left:411px;top:917px;width:25.5px;height:25.5px;background:#fff;border:1px solid #3a3a3a;box-sizing:border-box;"></div>
<div class="a" style="left:398px;top:904.5px;width:25px;height:23.5px;background:#dcdbf3;border:1.5px solid #f4f4f4;box-sizing:border-box;box-shadow:0 0 0 1px #3a3a3a;"></div>
<div class="a" style="left:406px;top:958px;width:22.5px;height:17.5px;border:1.5px solid #dedede;box-sizing:border-box;"></div>
<svg style="left:411px;top:960.5px;" width="12" height="12" viewBox="0 0 12 12"><circle cx="6" cy="6" r="4.7" fill="none" stroke="#dedede" stroke-width="1.2" stroke-dasharray="1.2 1.25"/></svg>
<div class="a" style="left:406px;top:995.5px;width:15px;height:14.5px;border:1.5px solid #dedede;border-bottom:none;box-sizing:border-box;"></div>
<div class="a" style="left:411.5px;top:992px;width:17px;height:13px;border:1.5px solid #dedede;box-sizing:border-box;background:#535353;"></div>
<div class="a" style="left:446px;top:118px;width:872px;height:37px;background:#424242;"></div>
<div class="a" style="left:446px;top:118px;width:427px;height:37px;background:#535353;"></div>
<div class="a" style="left:873px;top:118px;width:1px;height:37px;background:#383838;"></div>
<div class="a" style="left:446px;top:154.4px;width:872px;height:1.6px;background:#383838;"></div>
<svg style="left:456.3px;top:131.8px;" width="9.4" height="9.4" viewBox="0 0 9.4 9.4"><path d="M1 1 L8.4 8.4 M8.4 1 L1 8.4" stroke="#cdcdcd" stroke-width="1.3"/></svg>
<div class="t" style="left:478.00px;top:127.10px;font-size:16.5px;line-height:21px;font-weight:bold;color:#f0f0f0;transform:scaleX(0.9483);transform-origin:0 50%;">Vintage Igor.psd @ 66.7% (Gate Controls, RGB/8*) *</div>
<div class="a" style="left:446px;top:156px;width:848px;height:22px;background:#4a4a4a;"></div>
<div class="a" style="left:446px;top:177.5px;width:22px;height:811px;background:#4a4a4a;"></div>
<div class="a" style="left:1294px;top:155.5px;width:21.5px;height:833px;background:#4d4d4d;"></div>
<div class="a" style="left:467.2px;top:177.1px;width:826.8px;height:1.4px;background:#6c6c6c;"></div>
<div class="a" style="left:467.2px;top:178px;width:1.8px;height:810px;background:#6c6c6c;"></div>
<div class="a" style="left:447px;top:172px;width:20px;height:1px;background:repeating-linear-gradient(90deg,#707070 0 1px,transparent 1px 3px);"></div>
<div class="a" style="left:462.5px;top:157px;width:1px;height:20px;background:repeating-linear-gradient(#707070 0 1px,transparent 1px 3px);"></div>
<div class="a" style="left:469px;top:178.5px;width:825px;height:809.5px;background:#282828;"></div>
<svg style="left:468px;top:155.5px;overflow:hidden;" width="826" height="22" viewBox="0 0 826 22"><rect x="6.32" y="16.3" width="1" height="5.2" fill="#858585"/><rect x="14.24" y="17.5" width="1" height="4" fill="#858585"/><rect x="22.15" y="14.7" width="1" height="6.8" fill="#858585"/><rect x="30.07" y="17.5" width="1" height="4" fill="#858585"/><rect x="37.99" y="16.3" width="1" height="5.2" fill="#858585"/><rect x="45.90" y="17.5" width="1" height="4" fill="#858585"/><rect x="53.82" y="0.5" width="1" height="21" fill="#858585"/><rect x="61.74" y="17.5" width="1" height="4" fill="#858585"/><rect x="69.65" y="16.3" width="1" height="5.2" fill="#858585"/><rect x="77.57" y="17.5" width="1" height="4" fill="#858585"/><rect x="85.48" y="14.7" width="1" height="6.8" fill="#858585"/><rect x="93.40" y="17.5" width="1" height="4" fill="#858585"/><rect x="101.32" y="16.3" width="1" height="5.2" fill="#858585"/><rect x="109.23" y="17.5" width="1" height="4" fill="#858585"/><rect x="117.15" y="0.5" width="1" height="21" fill="#858585"/><rect x="125.07" y="17.5" width="1" height="4" fill="#858585"/><rect x="132.98" y="16.3" width="1" height="5.2" fill="#858585"/><rect x="140.90" y="17.5" width="1" height="4" fill="#858585"/><rect x="148.81" y="14.7" width="1" height="6.8" fill="#858585"/><rect x="156.73" y="17.5" width="1" height="4" fill="#858585"/><rect x="164.65" y="16.3" width="1" height="5.2" fill="#858585"/><rect x="172.56" y="17.5" width="1" height="4" fill="#858585"/><rect x="180.48" y="0.5" width="1" height="21" fill="#858585"/><rect x="188.40" y="17.5" width="1" height="4" fill="#858585"/><rect x="196.31" y="16.3" width="1" height="5.2" fill="#858585"/><rect x="204.23" y="17.5" width="1" height="4" fill="#858585"/><rect x="212.14" y="14.7" width="1" height="6.8" fill="#858585"/><rect x="220.06" y="17.5" width="1" height="4" fill="#858585"/><rect x="227.98" y="16.3" width="1" height="5.2" fill="#858585"/><rect x="235.89" y="17.5" width="1" height="4" fill="#858585"/><rect x="243.81" y="0.5" width="1" height="21" fill="#858585"/><rect x="251.73" y="17.5" width="1" height="4" fill="#858585"/><rect x="259.64" y="16.3" width="1" height="5.2" fill="#858585"/><rect x="267.56" y="17.5" width="1" height="4" fill="#858585"/><rect x="275.47" y="14.7" width="1" height="6.8" fill="#858585"/><rect x="283.39" y="17.5" width="1" height="4" fill="#858585"/><rect x="291.31" y="16.3" width="1" height="5.2" fill="#858585"/><rect x="299.22" y="17.5" width="1" height="4" fill="#858585"/><rect x="307.14" y="0.5" width="1" height="21" fill="#858585"/><rect x="315.06" y="17.5" width="1" height="4" fill="#858585"/><rect x="322.97" y="16.3" width="1" height="5.2" fill="#858585"/><rect x="330.89" y="17.5" width="1" height="4" fill="#858585"/><rect x="338.80" y="14.7" width="1" height="6.8" fill="#858585"/><rect x="346.72" y="17.5" width="1" height="4" fill="#858585"/><rect x="354.64" y="16.3" width="1" height="5.2" fill="#858585"/><rect x="362.55" y="17.5" width="1" height="4" fill="#858585"/><rect x="370.47" y="0.5" width="1" height="21" fill="#858585"/><rect x="378.39" y="17.5" width="1" height="4" fill="#858585"/><rect x="386.30" y="16.3" width="1" height="5.2" fill="#858585"/><rect x="394.22" y="17.5" width="1" height="4" fill="#858585"/><rect x="402.13" y="14.7" width="1" height="6.8" fill="#858585"/><rect x="410.05" y="17.5" width="1" height="4" fill="#858585"/><rect x="417.97" y="16.3" width="1" height="5.2" fill="#858585"/><rect x="425.88" y="17.5" width="1" height="4" fill="#858585"/><rect x="433.80" y="0.5" width="1" height="21" fill="#858585"/><rect x="441.72" y="17.5" width="1" height="4" fill="#858585"/><rect x="449.63" y="16.3" width="1" height="5.2" fill="#858585"/><rect x="457.55" y="17.5" width="1" height="4" fill="#858585"/><rect x="465.46" y="14.7" width="1" height="6.8" fill="#858585"/><rect x="473.38" y="17.5" width="1" height="4" fill="#858585"/><rect x="481.30" y="16.3" width="1" height="5.2" fill="#858585"/><rect x="489.21" y="17.5" width="1" height="4" fill="#858585"/><rect x="497.13" y="0.5" width="1" height="21" fill="#858585"/><rect x="505.05" y="17.5" width="1" height="4" fill="#858585"/><rect x="512.96" y="16.3" width="1" height="5.2" fill="#858585"/><rect x="520.88" y="17.5" width="1" height="4" fill="#858585"/><rect x="528.79" y="14.7" width="1" height="6.8" fill="#858585"/><rect x="536.71" y="17.5" width="1" height="4" fill="#858585"/><rect x="544.63" y="16.3" width="1" height="5.2" fill="#858585"/><rect x="552.54" y="17.5" width="1" height="4" fill="#858585"/><rect x="560.46" y="0.5" width="1" height="21" fill="#858585"/><rect x="568.38" y="17.5" width="1" height="4" fill="#858585"/><rect x="576.29" y="16.3" width="1" height="5.2" fill="#858585"/><rect x="584.21" y="17.5" width="1" height="4" fill="#858585"/><rect x="592.12" y="14.7" width="1" height="6.8" fill="#858585"/><rect x="600.04" y="17.5" width="1" height="4" fill="#858585"/><rect x="607.96" y="16.3" width="1" height="5.2" fill="#858585"/><rect x="615.87" y="17.5" width="1" height="4" fill="#858585"/><rect x="623.79" y="0.5" width="1" height="21" fill="#858585"/><rect x="631.71" y="17.5" width="1" height="4" fill="#858585"/><rect x="639.62" y="16.3" width="1" height="5.2" fill="#858585"/><rect x="647.54" y="17.5" width="1" height="4" fill="#858585"/><rect x="655.45" y="14.7" width="1" height="6.8" fill="#858585"/><rect x="663.37" y="17.5" width="1" height="4" fill="#858585"/><rect x="671.29" y="16.3" width="1" height="5.2" fill="#858585"/><rect x="679.20" y="17.5" width="1" height="4" fill="#858585"/><rect x="687.12" y="0.5" width="1" height="21" fill="#858585"/><rect x="695.04" y="17.5" width="1" height="4" fill="#858585"/><rect x="702.95" y="16.3" width="1" height="5.2" fill="#858585"/><rect x="710.87" y="17.5" width="1" height="4" fill="#858585"/><rect x="718.78" y="14.7" width="1" height="6.8" fill="#858585"/><rect x="726.70" y="17.5" width="1" height="4" fill="#858585"/><rect x="734.62" y="16.3" width="1" height="5.2" fill="#858585"/><rect x="742.53" y="17.5" width="1" height="4" fill="#858585"/><rect x="750.45" y="0.5" width="1" height="21" fill="#858585"/><rect x="758.37" y="17.5" width="1" height="4" fill="#858585"/><rect x="766.28" y="16.3" width="1" height="5.2" fill="#858585"/><rect x="774.20" y="17.5" width="1" height="4" fill="#858585"/><rect x="782.12" y="14.7" width="1" height="6.8" fill="#858585"/><rect x="790.03" y="17.5" width="1" height="4" fill="#858585"/><rect x="797.95" y="16.3" width="1" height="5.2" fill="#858585"/><rect x="805.86" y="17.5" width="1" height="4" fill="#858585"/><rect x="813.78" y="0.5" width="1" height="21" fill="#858585"/><rect x="821.70" y="17.5" width="1" height="4" fill="#858585"/></svg>
<div class="t" style="left:468.00px;top:160.60px;font-size:14px;line-height:18px;color:#b4b4b4;">4</div>
<div class="t" style="left:524.32px;top:160.60px;font-size:14px;line-height:18px;color:#b4b4b4;">12</div>
<div class="t" style="left:587.65px;top:160.60px;font-size:14px;line-height:18px;color:#b4b4b4;">10</div>
<div class="t" style="left:650.98px;top:160.60px;font-size:14px;line-height:18px;color:#b4b4b4;">8</div>
<div class="t" style="left:714.31px;top:160.60px;font-size:14px;line-height:18px;color:#b4b4b4;">6</div>
<div class="t" style="left:777.64px;top:160.60px;font-size:14px;line-height:18px;color:#b4b4b4;">4</div>
<div class="t" style="left:840.97px;top:160.60px;font-size:14px;line-height:18px;color:#b4b4b4;">2</div>
<div class="t" style="left:904.30px;top:160.60px;font-size:14px;line-height:18px;color:#b4b4b4;">0</div>
<div class="t" style="left:967.63px;top:160.60px;font-size:14px;line-height:18px;color:#b4b4b4;">2</div>
<div class="t" style="left:1030.96px;top:160.60px;font-size:14px;line-height:18px;color:#b4b4b4;">4</div>
<div class="t" style="left:1094.29px;top:160.60px;font-size:14px;line-height:18px;color:#b4b4b4;">6</div>
<div class="t" style="left:1157.62px;top:160.60px;font-size:14px;line-height:18px;color:#b4b4b4;">8</div>
<div class="t" style="left:1220.95px;top:160.60px;font-size:14px;line-height:18px;color:#b4b4b4;">10</div>
<div class="t" style="left:1284.28px;top:160.60px;font-size:14px;line-height:18px;color:#b4b4b4;width:9.2px;overflow:hidden;">12</div>
<svg style="left:445.6px;top:178px;overflow:hidden;" width="22" height="810" viewBox="0 0 22 810"><rect x="17.5" y="1.99" width="4" height="1" fill="#858585"/><rect x="0.5" y="9.91" width="21" height="1" fill="#858585"/><rect x="17.5" y="17.83" width="4" height="1" fill="#858585"/><rect x="16.3" y="25.74" width="5.2" height="1" fill="#858585"/><rect x="17.5" y="33.66" width="4" height="1" fill="#858585"/><rect x="14.7" y="41.57" width="6.8" height="1" fill="#858585"/><rect x="17.5" y="49.49" width="4" height="1" fill="#858585"/><rect x="16.3" y="57.41" width="5.2" height="1" fill="#858585"/><rect x="17.5" y="65.32" width="4" height="1" fill="#858585"/><rect x="0.5" y="73.24" width="21" height="1" fill="#858585"/><rect x="17.5" y="81.16" width="4" height="1" fill="#858585"/><rect x="16.3" y="89.07" width="5.2" height="1" fill="#858585"/><rect x="17.5" y="96.99" width="4" height="1" fill="#858585"/><rect x="14.7" y="104.90" width="6.8" height="1" fill="#858585"/><rect x="17.5" y="112.82" width="4" height="1" fill="#858585"/><rect x="16.3" y="120.74" width="5.2" height="1" fill="#858585"/><rect x="17.5" y="128.65" width="4" height="1" fill="#858585"/><rect x="0.5" y="136.57" width="21" height="1" fill="#858585"/><rect x="17.5" y="144.49" width="4" height="1" fill="#858585"/><rect x="16.3" y="152.40" width="5.2" height="1" fill="#858585"/><rect x="17.5" y="160.32" width="4" height="1" fill="#858585"/><rect x="14.7" y="168.23" width="6.8" height="1" fill="#858585"/><rect x="17.5" y="176.15" width="4" height="1" fill="#858585"/><rect x="16.3" y="184.07" width="5.2" height="1" fill="#858585"/><rect x="17.5" y="191.98" width="4" height="1" fill="#858585"/><rect x="0.5" y="199.90" width="21" height="1" fill="#858585"/><rect x="17.5" y="207.82" width="4" height="1" fill="#858585"/><rect x="16.3" y="215.73" width="5.2" height="1" fill="#858585"/><rect x="17.5" y="223.65" width="4" height="1" fill="#858585"/><rect x="14.7" y="231.56" width="6.8" height="1" fill="#858585"/><rect x="17.5" y="239.48" width="4" height="1" fill="#858585"/><rect x="16.3" y="247.40" width="5.2" height="1" fill="#858585"/><rect x="17.5" y="255.31" width="4" height="1" fill="#858585"/><rect x="0.5" y="263.23" width="21" height="1" fill="#858585"/><rect x="17.5" y="271.15" width="4" height="1" fill="#858585"/><rect x="16.3" y="279.06" width="5.2" height="1" fill="#858585"/><rect x="17.5" y="286.98" width="4" height="1" fill="#858585"/><rect x="14.7" y="294.89" width="6.8" height="1" fill="#858585"/><rect x="17.5" y="302.81" width="4" height="1" fill="#858585"/><rect x="16.3" y="310.73" width="5.2" height="1" fill="#858585"/><rect x="17.5" y="318.64" width="4" height="1" fill="#858585"/><rect x="0.5" y="326.56" width="21" height="1" fill="#858585"/><rect x="17.5" y="334.48" width="4" height="1" fill="#858585"/><rect x="16.3" y="342.39" width="5.2" height="1" fill="#858585"/><rect x="17.5" y="350.31" width="4" height="1" fill="#858585"/><rect x="14.7" y="358.22" width="6.8" height="1" fill="#858585"/><rect x="17.5" y="366.14" width="4" height="1" fill="#858585"/><rect x="16.3" y="374.06" width="5.2" height="1" fill="#858585"/><rect x="17.5" y="381.97" width="4" height="1" fill="#858585"/><rect x="0.5" y="389.89" width="21" height="1" fill="#858585"/><rect x="17.5" y="397.81" width="4" height="1" fill="#858585"/><rect x="16.3" y="405.72" width="5.2" height="1" fill="#858585"/><rect x="17.5" y="413.64" width="4" height="1" fill="#858585"/><rect x="14.7" y="421.55" width="6.8" height="1" fill="#858585"/><rect x="17.5" y="429.47" width="4" height="1" fill="#858585"/><rect x="16.3" y="437.39" width="5.2" height="1" fill="#858585"/><rect x="17.5" y="445.30" width="4" height="1" fill="#858585"/><rect x="0.5" y="453.22" width="21" height="1" fill="#858585"/><rect x="17.5" y="461.14" width="4" height="1" fill="#858585"/><rect x="16.3" y="469.05" width="5.2" height="1" fill="#858585"/><rect x="17.5" y="476.97" width="4" height="1" fill="#858585"/><rect x="14.7" y="484.88" width="6.8" height="1" fill="#858585"/><rect x="17.5" y="492.80" width="4" height="1" fill="#858585"/><rect x="16.3" y="500.72" width="5.2" height="1" fill="#858585"/><rect x="17.5" y="508.63" width="4" height="1" fill="#858585"/><rect x="0.5" y="516.55" width="21" height="1" fill="#858585"/><rect x="17.5" y="524.47" width="4" height="1" fill="#858585"/><rect x="16.3" y="532.38" width="5.2" height="1" fill="#858585"/><rect x="17.5" y="540.30" width="4" height="1" fill="#858585"/><rect x="14.7" y="548.21" width="6.8" height="1" fill="#858585"/><rect x="17.5" y="556.13" width="4" height="1" fill="#858585"/><rect x="16.3" y="564.05" width="5.2" height="1" fill="#858585"/><rect x="17.5" y="571.96" width="4" height="1" fill="#858585"/><rect x="0.5" y="579.88" width="21" height="1" fill="#858585"/><rect x="17.5" y="587.80" width="4" height="1" fill="#858585"/><rect x="16.3" y="595.71" width="5.2" height="1" fill="#858585"/><rect x="17.5" y="603.63" width="4" height="1" fill="#858585"/><rect x="14.7" y="611.54" width="6.8" height="1" fill="#858585"/><rect x="17.5" y="619.46" width="4" height="1" fill="#858585"/><rect x="16.3" y="627.38" width="5.2" height="1" fill="#858585"/><rect x="17.5" y="635.29" width="4" height="1" fill="#858585"/><rect x="0.5" y="643.21" width="21" height="1" fill="#858585"/><rect x="17.5" y="651.13" width="4" height="1" fill="#858585"/><rect x="16.3" y="659.04" width="5.2" height="1" fill="#858585"/><rect x="17.5" y="666.96" width="4" height="1" fill="#858585"/><rect x="14.7" y="674.88" width="6.8" height="1" fill="#858585"/><rect x="17.5" y="682.79" width="4" height="1" fill="#858585"/><rect x="16.3" y="690.71" width="5.2" height="1" fill="#858585"/><rect x="17.5" y="698.62" width="4" height="1" fill="#858585"/><rect x="0.5" y="706.54" width="21" height="1" fill="#858585"/><rect x="17.5" y="714.46" width="4" height="1" fill="#858585"/><rect x="16.3" y="722.37" width="5.2" height="1" fill="#858585"/><rect x="17.5" y="730.29" width="4" height="1" fill="#858585"/><rect x="14.7" y="738.20" width="6.8" height="1" fill="#858585"/><rect x="17.5" y="746.12" width="4" height="1" fill="#858585"/><rect x="16.3" y="754.04" width="5.2" height="1" fill="#858585"/><rect x="17.5" y="761.95" width="4" height="1" fill="#858585"/><rect x="0.5" y="769.87" width="21" height="1" fill="#858585"/><rect x="17.5" y="777.79" width="4" height="1" fill="#858585"/><rect x="16.3" y="785.70" width="5.2" height="1" fill="#858585"/><rect x="17.5" y="793.62" width="4" height="1" fill="#858585"/><rect x="14.7" y="801.53" width="6.8" height="1" fill="#858585"/><rect x="17.5" y="809.45" width="4" height="1" fill="#858585"/></svg>
<div class="t" style="left:447.60px;top:189.81px;font-size:14px;line-height:18px;color:#b4b4b4;">6</div>
<div class="t" style="left:447.60px;top:253.14px;font-size:14px;line-height:18px;color:#b4b4b4;">4</div>
<div class="t" style="left:447.60px;top:316.47px;font-size:14px;line-height:18px;color:#b4b4b4;">2</div>
<div class="t" style="left:447.60px;top:379.80px;font-size:14px;line-height:18px;color:#b4b4b4;">0</div>
<div class="t" style="left:447.60px;top:443.13px;font-size:14px;line-height:18px;color:#b4b4b4;">2</div>
<div class="t" style="left:447.60px;top:506.46px;font-size:14px;line-height:18px;color:#b4b4b4;">4</div>
<div class="t" style="left:447.60px;top:569.79px;font-size:14px;line-height:18px;color:#b4b4b4;">6</div>
<div class="t" style="left:447.60px;top:633.12px;font-size:14px;line-height:18px;color:#b4b4b4;">8</div>
<div class="t" style="left:447.60px;top:696.45px;font-size:14px;line-height:18px;color:#b4b4b4;">1</div>
<div class="t" style="left:447.60px;top:709.75px;font-size:14px;line-height:18px;color:#b4b4b4;">0</div>
<div class="t" style="left:447.60px;top:759.78px;font-size:14px;line-height:18px;color:#b4b4b4;">1</div>
<div class="t" style="left:447.60px;top:773.08px;font-size:14px;line-height:18px;color:#b4b4b4;">2</div>
<div class="t" style="left:447.60px;top:823.11px;font-size:14px;line-height:18px;color:#b4b4b4;">1</div>
<div class="t" style="left:447.60px;top:836.41px;font-size:14px;line-height:18px;color:#b4b4b4;">4</div>
<div class="t" style="left:447.60px;top:886.44px;font-size:14px;line-height:18px;color:#b4b4b4;">1</div>
<div class="t" style="left:447.60px;top:899.74px;font-size:14px;line-height:18px;color:#b4b4b4;">6</div>
<div class="t" style="left:447.60px;top:949.77px;font-size:14px;line-height:18px;color:#b4b4b4;">1</div>
<div class="t" style="left:447.60px;top:963.07px;font-size:14px;line-height:18px;color:#b4b4b4;">8</div>
<div class="a" style="left:447px;top:366px;width:20px;height:1.3px;background:repeating-linear-gradient(90deg,#dcdcdc 0 1.3px,transparent 1.3px 2.67px);"></div>
<div class="a" style="left:833px;top:156.5px;width:1.3px;height:21px;background:repeating-linear-gradient(#dcdcdc 0 1px,transparent 1px 2px);"></div>
<div class="t" style="left:577.00px;top:352.00px;font-size:14px;line-height:18px;letter-spacing:0.304px;color:#dedede;-webkit-text-stroke:0;">Main Menu</div>
<div class="t" style="left:903.00px;top:351.00px;font-size:14px;line-height:18px;letter-spacing:0.624px;color:#f4f4f4;text-shadow:0 0 .4px #f4f4f4;">Gate Controls</div>
<div class="a" style="left:576px;top:377px;width:284px;height:424.5px;background:#202122;"></div>
<div class="a" style="left:577px;top:378px;width:282px;height:422px;background:repeating-linear-gradient(90deg,rgba(255,255,255,.10) 0px,rgba(255,255,255,.10) 2.2px,rgba(90,110,180,.06) 3.2px,rgba(90,110,180,.06) 4.8px,rgba(255,255,255,.10) 5.6px),linear-gradient(90deg,#c4d5ec,#d1dff3 60%,#d3e0f4);"></div>
<div class="a" style="left:577px;top:377.5px;width:282px;height:17.2px;background:linear-gradient(#cfe2ea,#d3e5ea);"></div>
<div class="a" style="left:577px;top:394.2px;width:282px;height:1.3px;background:#8098a8;"></div>
<div class="a" style="left:580.2px;top:390.1px;width:2.35px;height:1.5px;background:#4f93e0;"></div>
<div class="a" style="left:583.3000000000001px;top:388.6px;width:2.35px;height:3px;background:#4f93e0;"></div>
<div class="a" style="left:586.4000000000001px;top:386.8px;width:2.35px;height:4.8px;background:#4f93e0;"></div>
<div class="a" style="left:589.5px;top:384.8px;width:2.35px;height:6.8px;background:#62a4ea;"></div>
<div class="a" style="left:592.6px;top:382.6px;width:2.35px;height:9px;background:#62a4ea;"></div>
<div class="t" style="left:599.50px;top:380.00px;font-size:10.5px;line-height:14px;letter-spacing:0.072px;font-weight:bold;color:#5f6390;-webkit-text-stroke:0;">AT&amp;T</div>
<svg style="left:632.5px;top:381.2px;" width="15" height="10.5" viewBox="0 0 15 10.5"><g fill="none" stroke="#4a9be8" stroke-width="1.7"><path d="M1 4.2 A9 9 0 0 1 14 4.2"/><path d="M3.6 6.7 A5.6 5.6 0 0 1 11.4 6.7"/></g><circle cx="7.5" cy="9" r="1.4" fill="#4a9be8"/></svg>
<div class="t" style="left:696.25px;top:379.40px;font-size:10.5px;line-height:14px;letter-spacing:0.518px;font-weight:bold;color:#111;-webkit-text-stroke:0;">9:42 AM</div>
<div class="a" style="left:835.5px;top:382px;width:18.5px;height:8.7px;border:1px solid #aab4b2;border-radius:1.5px;box-sizing:border-box;background:linear-gradient(#a4e04a,#6cc010 55%,#7fcf1c);box-shadow:inset 0 0 0 1px #dfeae6;"></div><div class="a" style="left:854px;top:385px;width:1.2px;height:2.6px;background:#aab4b2;"></div>
<div class="a" style="left:577px;top:395.4px;width:282px;height:38.1px;background:linear-gradient(#a6c3da 0%,#94b4d3 38%,#80a3c9 62%,#7197c1 100%);"></div>
<div class="a" style="left:577px;top:433px;width:282px;height:1px;background:#587aa3;"></div>
<div class="t" style="left:699.00px;top:402.10px;font-size:18px;line-height:23px;letter-spacing:0.250px;font-weight:bold;color:#fff;text-shadow:0 1px 1.5px rgba(40,80,140,.9),0 0 2px rgba(40,80,140,.6);">Igor</div>
<svg style="left:795px;top:399px;" width="62" height="30" viewBox="0 0 62 30"><defs><linearGradient id="gt" x1="0" y1="0" x2="0" y2="1"><stop offset="0" stop-color="#86d0ec"/><stop offset=".42" stop-color="#5cb8dd"/><stop offset=".56" stop-color="#2e9ec7"/><stop offset="1" stop-color="#178ab2"/></linearGradient></defs><path d="M5.5 1.8 H48 Q50 1.8 51.2 3.2 L59 13 Q59.9 14.5 59 16 L51.2 25.8 Q50 27.2 48 27.2 H5.5 Q2.6 27.2 2.6 24.3 V4.7 Q2.6 1.8 5.5 1.8 Z" fill="none" stroke="#cdbfe6" stroke-opacity=".9" stroke-width="3.4" stroke-linejoin="round"/><path d="M5.5 1.8 H48 Q50 1.8 51.2 3.2 L59 13 Q59.9 14.5 59 16 L51.2 25.8 Q50 27.2 48 27.2 H5.5 Q2.6 27.2 2.6 24.3 V4.7 Q2.6 1.8 5.5 1.8 Z" fill="url(#gt)" stroke="#1f7391" stroke-width="1.5" stroke-linejoin="round"/></svg>
<div class="t" style="left:808.55px;top:404.30px;font-size:14px;line-height:18px;font-weight:bold;color:#fff;transform:scaleX(0.9799);transform-origin:0 50%;text-shadow:0 1px 1.2px rgba(10,70,120,.85),0 0 1.5px rgba(10,70,120,.5);-webkit-text-stroke:0;">Gate</div>
<div class="a" style="left:585px;top:523.5px;width:265px;height:105px;border-radius:6px;box-sizing:border-box;border:1.3px solid #4f7e98;background:repeating-linear-gradient(90deg,rgba(255,255,255,.05) 0px,rgba(255,255,255,.05) 1.2px,rgba(40,90,160,.05) 1.6px,rgba(40,90,160,.05) 2.5px,rgba(255,255,255,.05) 2.8px),linear-gradient(#b3d8f0 0%,#a3cfeb 35%,#7ab9dc 62%,#50a5cc 92%,#4a9fc7 100%);box-shadow:0 0 0 1.2px rgba(235,242,252,.8);"></div>
<div class="t" style="left:599.00px;top:555.50px;font-size:31.5px;line-height:41px;letter-spacing:-0.041px;color:#fff;text-shadow:0 0 1.6px #2b8dc6,0 0 1.6px #2b8dc6,0 0 2.5px rgba(43,141,198,.8),0 1px 2px rgba(30,110,160,.5);-webkit-text-stroke:0;">Connected</div>
<div class="a" style="left:577px;top:718.5px;width:282px;height:1.5px;background:#8d9db5;"></div>
<div class="a" style="left:577px;top:720px;width:282px;height:80px;background:linear-gradient(#a8c3da 0%,#a7c2da 45%,#7ea1c7 78%,#7499c2 100%);"></div>
<div class="a" style="left:595.5px;top:737.7px;width:243.8px;height:44.6px;border-radius:7.5px;background:linear-gradient(#b9ecfb 0%,#8ccfee 5%,#6dbde2 36%,#3a9fca 48%,#0f8cb6 56%,#0e8bb5 95%,#62c3dc 100%);border:1.4px solid #5d4a82;box-sizing:border-box;box-shadow:0 0 2px 1.6px rgba(205,210,238,.85),inset 1px 0 0 rgba(140,220,240,.55),inset -1px 0 0 rgba(140,220,240,.55);"></div>
<div class="t" style="left:629.40px;top:745.00px;font-size:23px;line-height:30px;letter-spacing:-0.108px;font-weight:bold;color:#fff;text-shadow:0 1px 1.5px rgba(10,60,130,.85),0 0 2px rgba(10,60,130,.55);">Unlock the Door</div>
<div class="a" style="left:900.6px;top:377px;width:285.7px;height:424.5px;background:#202122;"></div>
<div class="a" style="left:901.6px;top:378px;width:283.7px;height:422.6px;background:#fff;"></div>
<div class="a" style="left:901.6px;top:434px;width:283.7px;height:328px;overflow:hidden;"><div class="a" style="left:0;top:-8.17px;width:283.7px;height:345px;background:repeating-linear-gradient(180deg,#dfe5f6 0px,#e4e9f9 2px,#cdd5ec 5px,#b4bddc 9px,#a7b1d0 12px,#8d97b8 13.469999999999999px,#8089ac 14.37px);"></div><div class="a" style="left:0;top:0;width:283.7px;height:6.2px;background:linear-gradient(#97a3c2,#a6aece);"></div><div class="a" style="left:0;top:230px;width:283.7px;height:98px;background:linear-gradient(rgba(157,176,200,0) 0%,rgba(150,165,190,.55) 60%,rgba(157,176,200,1) 84%,rgba(160,178,202,1) 100%);"></div></div>
<div class="a" style="left:901.6px;top:762px;width:283.7px;height:4px;background:linear-gradient(#d4d4d4,#fff);"></div>
<div class="a" style="left:901.6px;top:377.5px;width:283.7px;height:17.2px;background:linear-gradient(#cfe2ea,#d3e5ea);"></div>
<div class="a" style="left:901.6px;top:394.2px;width:283.7px;height:1.3px;background:#8098a8;"></div>
<div class="a" style="left:904.8000000000001px;top:390.1px;width:2.35px;height:1.5px;background:#4f93e0;"></div>
<div class="a" style="left:907.9000000000001px;top:388.6px;width:2.35px;height:3px;background:#4f93e0;"></div>
<div class="a" style="left:911.0000000000001px;top:386.8px;width:2.35px;height:4.8px;background:#4f93e0;"></div>
<div class="a" style="left:914.1px;top:384.8px;width:2.35px;height:6.8px;background:#62a4ea;"></div>
<div class="a" style="left:917.2px;top:382.6px;width:2.35px;height:9px;background:#62a4ea;"></div>
<div class="t" style="left:924.10px;top:380.00px;font-size:10.5px;line-height:14px;letter-spacing:0.072px;font-weight:bold;color:#5f6390;-webkit-text-stroke:0;">AT&amp;T</div>
<svg style="left:957.1px;top:381.2px;" width="15" height="10.5" viewBox="0 0 15 10.5"><g fill="none" stroke="#4a9be8" stroke-width="1.7"><path d="M1 4.2 A9 9 0 0 1 14 4.2"/><path d="M3.6 6.7 A5.6 5.6 0 0 1 11.4 6.7"/></g><circle cx="7.5" cy="9" r="1.4" fill="#4a9be8"/></svg>
<div class="t" style="left:1020.85px;top:379.40px;font-size:10.5px;line-height:14px;letter-spacing:0.518px;font-weight:bold;color:#111;-webkit-text-stroke:0;">9:42 AM</div>
<div class="a" style="left:1160.1px;top:382px;width:18.5px;height:8.7px;border:1px solid #aab4b2;border-radius:1.5px;box-sizing:border-box;background:linear-gradient(#a4e04a,#6cc010 55%,#7fcf1c);box-shadow:inset 0 0 0 1px #dfeae6;"></div><div class="a" style="left:1178.6px;top:385px;width:1.2px;height:2.6px;background:#aab4b2;"></div>
<div class="a" style="left:901.6px;top:395.4px;width:283.7px;height:38.1px;background:linear-gradient(#a6c3da 0%,#94b4d3 38%,#80a3c9 62%,#7197c1 100%);"></div>
<div class="a" style="left:901.6px;top:433px;width:283.7px;height:1px;background:#587aa3;"></div>
<div class="t" style="left:981.00px;top:402.50px;font-size:18px;line-height:23px;letter-spacing:0.229px;font-weight:bold;color:#fff;text-shadow:0 1px 1.5px rgba(40,80,140,.9),0 0 2px rgba(40,80,140,.6);">Gate Controls</div>
<svg style="left:904.5px;top:399px;" width="42" height="30" viewBox="0 0 42 30"><defs><linearGradient id="bk" x1="0" y1="0" x2="0" y2="1"><stop offset="0" stop-color="#147d9f"/><stop offset=".42" stop-color="#1b8fb5"/><stop offset=".56" stop-color="#45aed6"/><stop offset="1" stop-color="#74cbec"/></linearGradient></defs><path d="M36 1.8 H14 Q12 1.8 10.8 3.2 L3.2 13 Q2.3 14.5 3.2 16 L10.8 25.8 Q12 27.2 14 27.2 H36 Q38.9 27.2 38.9 24.3 V4.7 Q38.9 1.8 36 1.8 Z" fill="none" stroke="#cdbfe6" stroke-opacity=".9" stroke-width="3.4" stroke-linejoin="round"/><path d="M36 1.8 H14 Q12 1.8 10.8 3.2 L3.2 13 Q2.3 14.5 3.2 16 L10.8 25.8 Q12 27.2 14 27.2 H36 Q38.9 27.2 38.9 24.3 V4.7 Q38.9 1.8 36 1.8 Z" fill="url(#bk)" stroke="#1a6987" stroke-width="1.5" stroke-linejoin="round"/><path d="M10.5 14.5 L20.5 6.3 V11 H31 Q32 11 32 12 V17 Q32 18 31 18 H20.5 V22.7 Z" fill="#fff" stroke="rgba(255,235,215,.55)" stroke-width="1.2"/></svg>
<div class="a" style="left:910.5px;top:522.4px;width:265.5px;height:230.5px;border-radius:6.5px;box-sizing:border-box;border:1.4px solid #23262e;overflow:hidden;box-shadow:0 0 0 1.3px rgba(225,232,246,.62);"><div class="a" style="left:0;top:-11.75px;width:266px;height:260px;background:repeating-linear-gradient(180deg,#6d7386 0px,#717789 2px,#626878 6px,#4d525f 10px,#40444f 13.17px,#2b2e37 13.77px,#2b2e37 14.37px);"></div><div class="a" style="left:0;top:0;width:266px;height:231px;background:linear-gradient(rgba(36,40,50,0) 0%,rgba(36,40,50,.12) 35%,rgba(36,40,50,.45) 66%,rgba(34,38,48,.9) 86%,rgba(36,40,50,.96) 100%);"></div></div>
<div class="a" style="left:918.9px;top:550.2px;width:248.20000000000002px;height:49.4px;border-radius:9.5px;box-sizing:border-box;border:1.1px solid rgba(214,176,226,.95);background:rgba(150,150,172,.55);"></div>
<div class="a" style="left:921.3px;top:552.6px;width:243.4px;height:44.6px;border-radius:7.5px;background:linear-gradient(#6bc4dc 0%,#0f8db7 5%,#0e8bb5 48%,#3fa3cf 56%,#62b5dc 70%,#8ccfee 96%,#b5ecfa 100%);border:1.4px solid #5d4a82;box-sizing:border-box;box-shadow:inset 1px 0 0 rgba(140,220,240,.55),inset -1px 0 0 rgba(140,220,240,.55);"></div>
<div class="t" style="left:963.50px;top:559.90px;font-size:23px;line-height:30px;letter-spacing:-0.056px;font-weight:bold;color:#fff;text-shadow:0 1px 1.5px rgba(10,60,130,.85),0 0 2px rgba(10,60,130,.55);">Raise the Gate</div>
<div class="a" style="left:918.9px;top:612.2px;width:248.20000000000002px;height:49.4px;border-radius:9.5px;box-sizing:border-box;border:1.1px solid rgba(214,176,226,.95);background:rgba(150,150,172,.55);"></div>
<div class="a" style="left:921.3px;top:614.6px;width:243.4px;height:44.6px;border-radius:7.5px;background:linear-gradient(#b9ecfb 0%,#8ccfee 5%,#6dbde2 36%,#3a9fca 48%,#0f8cb6 56%,#0e8bb5 95%,#62c3dc 100%);border:1.4px solid #5d4a82;box-sizing:border-box;box-shadow:inset 1px 0 0 rgba(140,220,240,.55),inset -1px 0 0 rgba(140,220,240,.55);"></div>
<div class="t" style="left:960.50px;top:621.90px;font-size:23px;line-height:30px;letter-spacing:-0.082px;font-weight:bold;color:#fff;text-shadow:0 1px 1.5px rgba(10,60,130,.85),0 0 2px rgba(10,60,130,.55);">Lower the Gate</div>
<div class="a" style="left:918.9px;top:674.2px;width:248.20000000000002px;height:49.4px;border-radius:9.5px;box-sizing:border-box;border:1.1px solid rgba(214,176,226,.95);background:rgba(150,150,172,.55);"></div>
<div class="a" style="left:921.3px;top:676.6px;width:243.4px;height:44.6px;border-radius:7.5px;background:linear-gradient(#f6b3a6 0%,#f0988a 6%,#e77c69 40%,#cc4129 52%,#b92b14 60%,#b82a13 96%,#d8604a 100%);border:1.4px solid #7e5286;box-sizing:border-box;box-shadow:inset 1px 0 0 rgba(255,200,190,.55),inset -1px 0 0 rgba(255,200,190,.55);"></div>
<div class="t" style="left:954.50px;top:683.90px;font-size:23px;line-height:30px;letter-spacing:-0.122px;font-weight:bold;color:#fff;text-shadow:0 1px 1.5px rgba(120,20,10,.85),0 0 2px rgba(120,20,10,.55);">Freeze the Gate!</div>
<div class="a" style="left:446px;top:988px;width:872px;height:22px;background:#535353;"></div>
<div class="a" style="left:446px;top:988px;width:80px;height:22px;background:#4a4a4a;"></div>
<div class="a" style="left:525.5px;top:988px;width:1px;height:22px;background:#424242;"></div>
<div class="t" style="left:462.00px;top:989.50px;font-size:13.5px;line-height:18px;letter-spacing:0.202px;color:#e6e6e6;">66.67%</div>
<div class="t" style="left:575.00px;top:990.50px;font-size:13.5px;line-height:18px;letter-spacing:0.364px;color:#e0e0e0;">Doc: 10.5M/236.0M</div>
<svg style="left:754px;top:993px;" width="6" height="12" viewBox="0 0 6 12"><path d="M1 1 L5 6 L1 11" fill="none" stroke="#d0d0d0" stroke-width="1.2"/></svg>
<div class="a" style="left:767.5px;top:988px;width:1px;height:22px;background:#424242;"></div>
<div class="a" style="left:768.5px;top:988px;width:546.5px;height:22px;background:#4a4a4a;"></div>
<div class="a" style="left:907px;top:991.5px;width:193px;height:13.5px;border-radius:7px;background:#6b6b6b;"></div>
<div class="a" style="left:1297.5px;top:496px;width:13px;height:304px;border-radius:7px;background:#6b6b6b;"></div>
<div class="a" style="left:1315px;top:117.5px;width:3.6px;height:893px;background:linear-gradient(90deg,#383838 0,#383838 26%,#454545 26%,#454545 74%,#383838 74%);"></div>
<div class="a" style="left:1318px;top:118px;width:208px;height:14px;background:#424242;"></div>
<div class="a" style="left:1318px;top:132px;width:208px;height:1.5px;background:#383838;"></div>
<svg style="left:1350.5px;top:121.5px;" width="10" height="7" viewBox="0 0 10 7"><path d="M4 0.5 L1 3.5 L4 6.5 M9 0.5 L6 3.5 L9 6.5" fill="none" stroke="#cfcfcf" stroke-width="1.1"/></svg>
<svg style="left:1507.5px;top:121.5px;" width="10" height="7" viewBox="0 0 10 7"><path d="M4 0.5 L1 3.5 L4 6.5 M9 0.5 L6 3.5 L9 6.5" fill="none" stroke="#cfcfcf" stroke-width="1.1"/></svg>
<div class="a" style="left:1368px;top:133.5px;width:3.6px;height:877px;background:linear-gradient(90deg,#383838 0,#383838 26%,#454545 26%,#454545 74%,#383838 74%);"></div>
<div class="a" style="left:1318px;top:186.2px;width:50px;height:1.7px;background:#383838;"></div>
<div class="a" style="left:1318px;top:240.6px;width:50px;height:1.7px;background:#383838;"></div>
<div class="a" style="left:1371.5px;top:222.5px;width:154.5px;height:2px;background:#3a3a3a;"></div>
<div class="a" style="left:1371.5px;top:314px;width:154.5px;height:2px;background:#3a3a3a;"></div>
<div class="a" style="left:1371.5px;top:405.5px;width:154.5px;height:2px;background:#3a3a3a;"></div>
<div class="a" style="left:1525.3px;top:118px;width:0.7px;height:892px;background:#3f3f3f;"></div>
<div class="a" style="left:1331px;top:138px;width:25px;height:5px;background:repeating-linear-gradient(90deg,#444 0 1px,transparent 1px 3px);"></div>
<div class="a" style="left:1331px;top:192.5px;width:25px;height:5px;background:repeating-linear-gradient(90deg,#444 0 1px,transparent 1px 3px);"></div>
<div class="a" style="left:1435.5px;top:137.5px;width:25px;height:5px;background:repeating-linear-gradient(90deg,#444 0 1px,transparent 1px 3px);"></div>
<div class="a" style="left:1435.5px;top:229px;width:25px;height:5px;background:repeating-linear-gradient(90deg,#444 0 1px,transparent 1px 3px);"></div>
<div class="a" style="left:1435.5px;top:320px;width:25px;height:5px;background:repeating-linear-gradient(90deg,#444 0 1px,transparent 1px 3px);"></div>
<svg style="left:1334.5px;top:153px;" width="21" height="24" viewBox="0 0 21 24"><rect x="0.6" y="0.6" width="6" height="6" fill="none" stroke="#dedede" stroke-width="1.1"/><rect x="2.3" y="2.3" width="2.6" height="2.6" fill="#dedede"/><rect x="0.6" y="8.7" width="6" height="6" fill="none" stroke="#dedede" stroke-width="1.1"/><rect x="2.3" y="10.399999999999999" width="2.6" height="2.6" fill="#dedede"/><rect x="0.6" y="16.8" width="6" height="6" fill="#dedede" stroke="#dedede" stroke-width="1.1"/><path d="M14 5 C21 9 19.5 18.5 11.5 22.5 C16.5 17.5 17.5 11 13.5 6.5 Z" fill="#dedede"/><path d="M10.5 5.8 L17.8 2.2 L16 8.8 Z" fill="#dedede"/></svg>
<svg style="left:1334.5px;top:207px;" width="21" height="23" viewBox="0 0 21 23"><g fill="none" stroke="#dedede" stroke-width="1.1" stroke-linejoin="round"><path d="M6.3 1 L12 3.8 V10.5 L6.3 13.5 L0.6 10.5 V3.8 Z"/><path d="M0.6 3.8 L6.3 6.7 L12 3.8 M6.3 6.7 V13.5"/></g><rect x="14.5" y="1.5" width="5.5" height="5" fill="#dedede"/><rect x="14.5" y="8.5" width="5.5" height="5" fill="#dedede"/><rect x="0.5" y="17" width="19.5" height="5" fill="#dedede"/><path d="M14.5 18.3 H18.5 L16.5 21 Z" fill="#444"/></svg>
<svg style="left:1385px;top:155.5px;" width="25" height="19" viewBox="0 0 25 19"><path d="M12.5 0.6 C19.5 0.6 24.5 4.8 24.5 9.5 C24.5 14.5 19 18.2 13 18.2 C6 18.2 0.5 15.5 0.5 10.5 C0.5 7.5 3 6 5.5 5.5 C8.5 5 8 0.6 12.5 0.6 Z" fill="#dedede"/><g fill="#4a4a4a"><circle cx="5.3" cy="10.5" r="1.7"/><circle cx="10.8" cy="13.6" r="1.7"/><circle cx="16.8" cy="12.8" r="1.7"/><circle cx="20.5" cy="8.8" r="1.7"/><circle cx="16.6" cy="4.6" r="1.5"/></g></svg>
<div class="t" style="left:1420.50px;top:155.50px;font-size:14.5px;line-height:19px;letter-spacing:-0.371px;font-weight:bold;color:#f0f0f0;">Color</div>
<svg style="left:1386.5px;top:190.5px;" width="22" height="22" viewBox="0 0 22 22"><rect x="0.6" y="0.6" width="20.8" height="20.8" fill="#dedede"/><rect x="1.6" y="1.6" width="5.4" height="5.4" fill="#8c8c8c"/><rect x="8.5" y="1.6" width="5.4" height="5.4" fill="#5f5f5f"/><rect x="15.4" y="1.6" width="5.4" height="5.4" fill="#3e3e3e"/><rect x="1.6" y="8.5" width="5.4" height="5.4" fill="#555"/><rect x="8.5" y="8.5" width="5.4" height="5.4" fill="#3a3a3a"/><rect x="15.4" y="8.5" width="5.4" height="5.4" fill="#2e2e2e"/><rect x="1.6" y="15.4" width="5.4" height="5.4" fill="#333"/><rect x="8.5" y="15.4" width="5.4" height="5.4" fill="#2c2c2c"/><rect x="15.4" y="15.4" width="5.4" height="5.4" fill="#262626"/></svg>
<div class="t" style="left:1420.50px;top:192.50px;font-size:14.5px;line-height:19px;letter-spacing:-0.612px;font-weight:bold;color:#f0f0f0;">Swatches</div>
<svg style="left:1383px;top:244.5px;" width="29" height="21.5" viewBox="0 0 29 21.5"><path d="M8 20.5 C3 20.5 0.7 17.3 0.7 13.8 C0.7 10.5 3 8 6 7.5 C7.5 3.5 11 0.8 15.5 0.8 C19.5 0.8 23 3.2 24.2 7 C26.8 8.2 28.3 10.8 28.3 13.5 C28.3 17.5 25.5 20.5 21.5 20.5 Z" fill="#9a9a9a" stroke="#dedede" stroke-width="1.4"/><g fill="none" stroke="#dedede" stroke-width="1.5"><path d="M13 16.5 H9.5 a4.2 4.2 0 0 1 0 -8.4 C11.5 8.1 12.5 9 14 10.5 L17 13.5"/><path d="M12 9.5 C13 6.5 15.2 5 17.2 5 a5.7 5.7 0 0 1 2 11 H17"/></g></svg>
<div class="t" style="left:1420.50px;top:247.00px;font-size:14.5px;line-height:19px;letter-spacing:-0.250px;font-weight:bold;color:#f0f0f0;">Libraries</div>
<svg style="left:1386.5px;top:283px;" width="20" height="20" viewBox="0 0 20 20"><circle cx="10" cy="10" r="9" fill="none" stroke="#dedede" stroke-width="1.4"/><path d="M3.7 16.4 A9 9 0 0 0 16.4 3.7 Z" fill="#dedede"/></svg>
<div class="t" style="left:1420.50px;top:284.00px;font-size:14.5px;line-height:19px;letter-spacing:-0.295px;font-weight:bold;color:#f0f0f0;">Adjustment...</div>
<svg style="left:1385.5px;top:335.5px;" width="24" height="23" viewBox="0 0 24 23"><circle cx="12" cy="7.5" r="7" fill="#8a8a8a" fill-opacity=".85"/><circle cx="7.5" cy="15" r="7" fill="#d0d0d0" fill-opacity=".8"/><circle cx="16.5" cy="15" r="7" fill="#d0d0d0" fill-opacity=".8"/><path d="M12 9 L15 13.5 L12 16.5 L9 13.5 Z" fill="#555"/></svg>
<div class="t" style="left:1420.50px;top:338.00px;font-size:14.5px;line-height:19px;letter-spacing:-0.471px;font-weight:bold;color:#f0f0f0;">Channels</div>
<svg style="left:1383px;top:373.5px;" width="28.5" height="20.5" viewBox="0 0 28.5 20.5"><g fill="none" stroke="#dedede" stroke-width="1.1"><path d="M3 2.8 H25.5"/><path d="M5.6 15 C6 8 9 3.5 14 3"/><path d="M22.4 15 C22 8 19 3.5 14 3"/></g><rect x="0.6" y="0.6" width="4.2" height="4.2" fill="#dedede" stroke="#dedede" stroke-width="1"/><rect x="11.9" y="1.2" width="4.2" height="4.2" fill="#dedede" stroke="#dedede" stroke-width="1"/><rect x="23.2" y="0.6" width="4.2" height="4.2" fill="#dedede" stroke="#dedede" stroke-width="1"/><rect x="3.5" y="15" width="4.2" height="4.2" fill="#535353" stroke="#dedede" stroke-width="1"/><rect x="20.3" y="15" width="4.2" height="4.2" fill="#535353" stroke="#dedede" stroke-width="1"/></svg>
<div class="t" style="left:1420.50px;top:375.00px;font-size:14.5px;line-height:19px;letter-spacing:-0.597px;font-weight:bold;color:#f0f0f0;">Paths</div>
</body></html>
